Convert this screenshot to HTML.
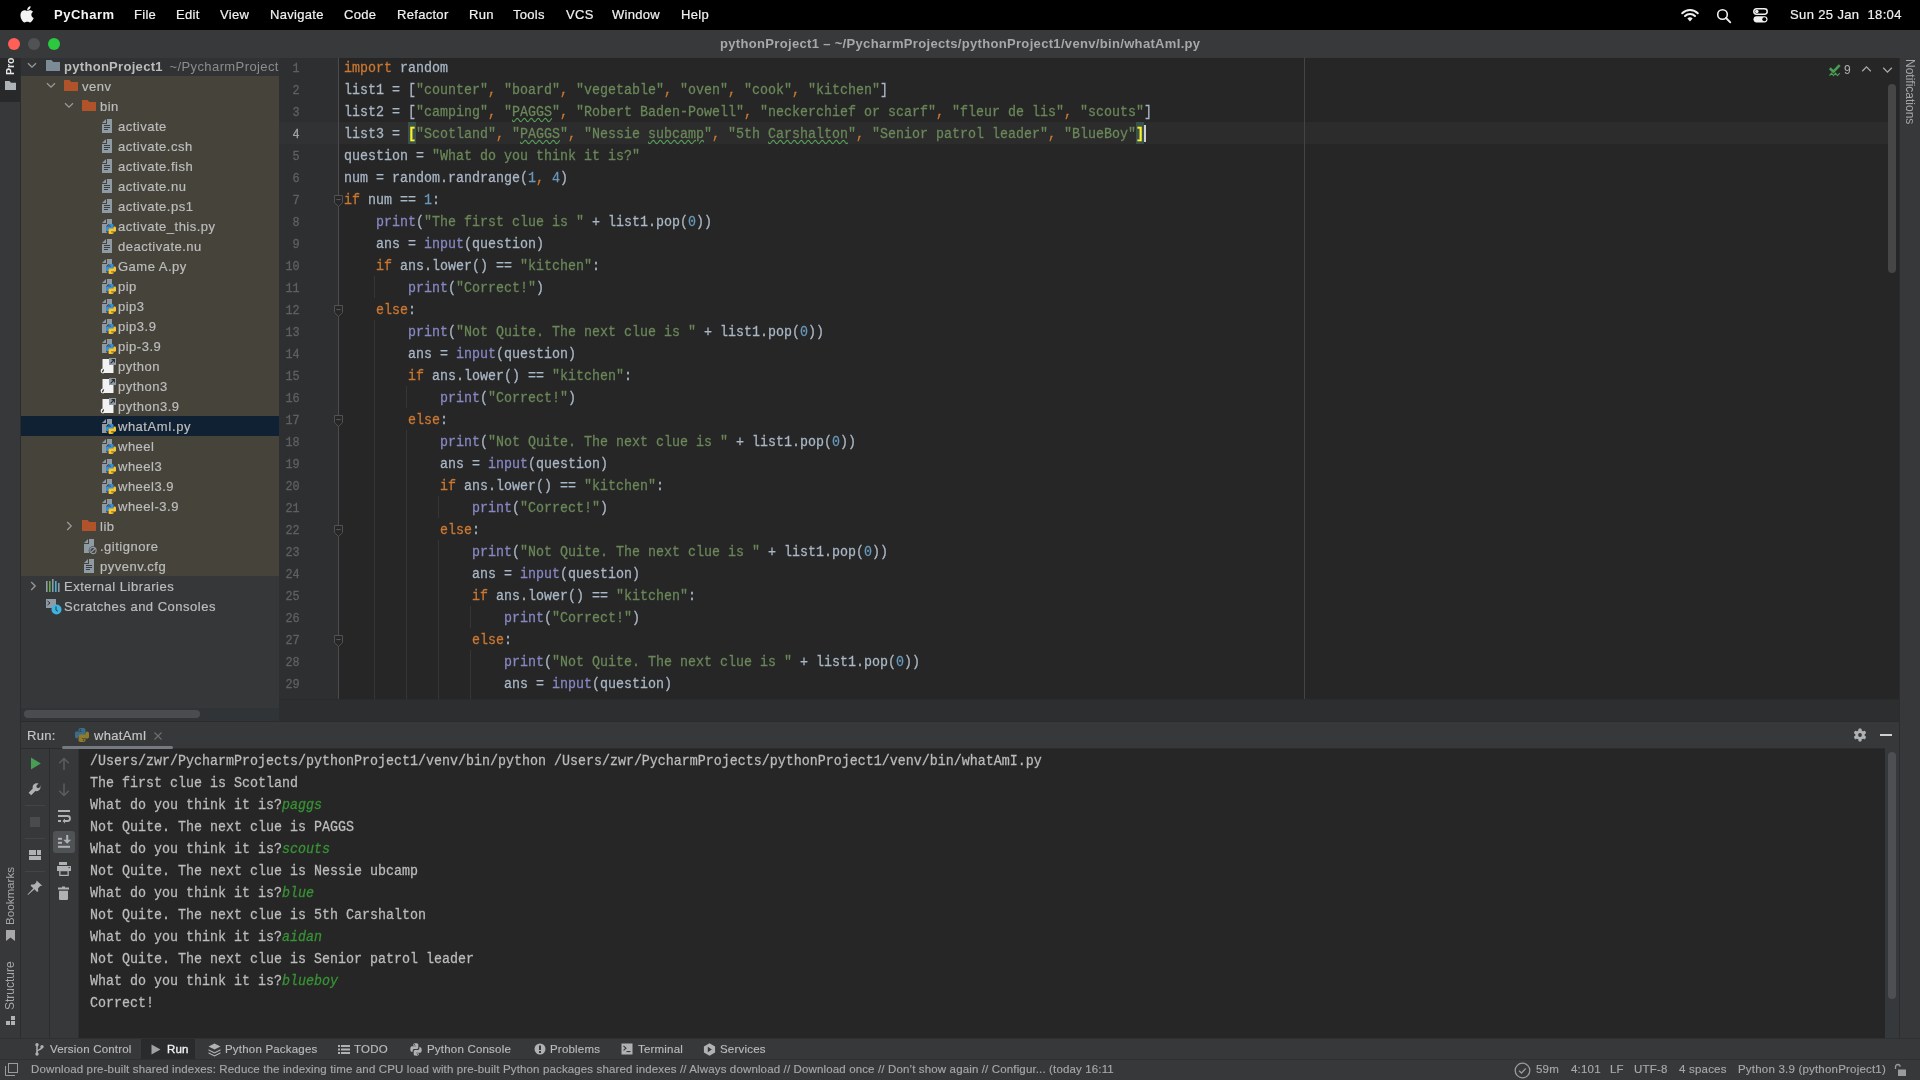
<!DOCTYPE html><html><head><meta charset="utf-8"><title>PyCharm</title><style>html,body{margin:0;padding:0}body{width:1920px;height:1080px;overflow:hidden;position:relative;background:#37383a}</style></head><body><div style="position:absolute;left:0;top:0;width:1920px;height:1080px;overflow:hidden;will-change:transform">
<div style="position:absolute;left:0px;top:0px;width:1920px;height:30px;background:#000;"></div>
<svg style="position:absolute;left:20px;top:5.6px;" width="16" height="18" viewBox="0 0 16 18"><g transform="translate(0.3 0) scale(0.92 0.96)"><path fill="#f2f2f2" d="M11.2 0.3c0.1 1.1-0.3 2.1-1 2.9-0.7 0.8-1.7 1.3-2.7 1.2-0.1-1 0.4-2.1 1-2.8 0.7-0.8 1.8-1.3 2.7-1.3zM14.6 12.6c-0.4 0.9-0.6 1.3-1.1 2.1-0.7 1.1-1.7 2.5-3 2.5-1.1 0-1.4-0.7-2.9-0.7-1.5 0-1.8 0.7-2.9 0.7-1.3 0-2.2-1.3-2.9-2.4C-0.1 11.9-0.3 8.3 0.9 6.4 1.8 5.1 3.1 4.3 4.400 4.300c1.3 0 2.1 0.7 3.2 0.7 1 0 1.700-0.7 3.200-0.7 1.100 0 2.300 0.600 3.100 1.700-2.800 1.500-2.300 5.500 0.700 6.600z"/></g></svg>
<div style="position:absolute;left:54px;top:6.82px;font-family:'Liberation Sans', sans-serif;font-size:13px;color:#f5f5f5;font-weight:bold;white-space:pre;line-height:normal;letter-spacing:0.5px;">PyCharm</div>
<div style="position:absolute;left:134px;top:6.82px;font-family:'Liberation Sans', sans-serif;font-size:13px;color:#f0f0f0;font-weight:normal;white-space:pre;line-height:normal;letter-spacing:0.3px;-webkit-text-stroke:0.2px #f0f0f0">File</div>
<div style="position:absolute;left:176px;top:6.82px;font-family:'Liberation Sans', sans-serif;font-size:13px;color:#f0f0f0;font-weight:normal;white-space:pre;line-height:normal;letter-spacing:0.3px;-webkit-text-stroke:0.2px #f0f0f0">Edit</div>
<div style="position:absolute;left:220px;top:6.82px;font-family:'Liberation Sans', sans-serif;font-size:13px;color:#f0f0f0;font-weight:normal;white-space:pre;line-height:normal;letter-spacing:0.3px;-webkit-text-stroke:0.2px #f0f0f0">View</div>
<div style="position:absolute;left:270px;top:6.82px;font-family:'Liberation Sans', sans-serif;font-size:13px;color:#f0f0f0;font-weight:normal;white-space:pre;line-height:normal;letter-spacing:0.3px;-webkit-text-stroke:0.2px #f0f0f0">Navigate</div>
<div style="position:absolute;left:344px;top:6.82px;font-family:'Liberation Sans', sans-serif;font-size:13px;color:#f0f0f0;font-weight:normal;white-space:pre;line-height:normal;letter-spacing:0.3px;-webkit-text-stroke:0.2px #f0f0f0">Code</div>
<div style="position:absolute;left:397px;top:6.82px;font-family:'Liberation Sans', sans-serif;font-size:13px;color:#f0f0f0;font-weight:normal;white-space:pre;line-height:normal;letter-spacing:0.3px;-webkit-text-stroke:0.2px #f0f0f0">Refactor</div>
<div style="position:absolute;left:469px;top:6.82px;font-family:'Liberation Sans', sans-serif;font-size:13px;color:#f0f0f0;font-weight:normal;white-space:pre;line-height:normal;letter-spacing:0.3px;-webkit-text-stroke:0.2px #f0f0f0">Run</div>
<div style="position:absolute;left:513px;top:6.82px;font-family:'Liberation Sans', sans-serif;font-size:13px;color:#f0f0f0;font-weight:normal;white-space:pre;line-height:normal;letter-spacing:0.3px;-webkit-text-stroke:0.2px #f0f0f0">Tools</div>
<div style="position:absolute;left:566px;top:6.82px;font-family:'Liberation Sans', sans-serif;font-size:13px;color:#f0f0f0;font-weight:normal;white-space:pre;line-height:normal;letter-spacing:0.3px;-webkit-text-stroke:0.2px #f0f0f0">VCS</div>
<div style="position:absolute;left:612px;top:6.82px;font-family:'Liberation Sans', sans-serif;font-size:13px;color:#f0f0f0;font-weight:normal;white-space:pre;line-height:normal;letter-spacing:0.3px;-webkit-text-stroke:0.2px #f0f0f0">Window</div>
<div style="position:absolute;left:681px;top:6.82px;font-family:'Liberation Sans', sans-serif;font-size:13px;color:#f0f0f0;font-weight:normal;white-space:pre;line-height:normal;letter-spacing:0.3px;-webkit-text-stroke:0.2px #f0f0f0">Help</div>
<svg style="position:absolute;left:1680px;top:7px;" width="20" height="16" viewBox="0 0 20 16"><g fill="none" stroke="#f0f0f0" stroke-width="2" stroke-linecap="round"><path d="M2.2 6.2a11 11 0 0 1 15.6 0"/><path d="M5 9a7 7 0 0 1 10 0"/></g><path fill="#f0f0f0" d="M7.4 11.6a3.6 3.6 0 0 1 5.2 0L10 14.6z"/></svg>
<svg style="position:absolute;left:1716px;top:8px;" width="16" height="16" viewBox="0 0 16 16"><circle cx="6.5" cy="6.5" r="4.8" fill="none" stroke="#f0f0f0" stroke-width="1.6"/><path d="M10 10l4.3 4.3" stroke="#f0f0f0" stroke-width="1.8" stroke-linecap="round"/></svg>
<svg style="position:absolute;left:1753px;top:8px;" width="16" height="15" viewBox="0 0 16 15"><rect x="0.8" y="0.8" width="13.4" height="5.4" rx="2.7" fill="none" stroke="#f0f0f0" stroke-width="1.5"/><circle cx="3.8" cy="3.5" r="1.8" fill="#f0f0f0"/><rect x="0.5" y="8.2" width="14" height="6.2" rx="3.1" fill="#f0f0f0"/><circle cx="11.3" cy="11.3" r="2" fill="#000"/></svg>
<div style="position:absolute;left:1790px;top:6.82px;font-family:'Liberation Sans', sans-serif;font-size:13px;color:#f0f0f0;font-weight:normal;white-space:pre;line-height:normal;letter-spacing:0.37px;-webkit-text-stroke:0.2px #f0f0f0">Sun 25 Jan  18:04</div>
<div style="position:absolute;left:0px;top:30px;width:1920px;height:28px;background:#37393b;"></div>
<div style="position:absolute;left:8px;top:38px;width:12px;height:12px;border-radius:50%;background:#fe5f57"></div>
<div style="position:absolute;left:28px;top:38px;width:12px;height:12px;border-radius:50%;background:#505254"></div>
<div style="position:absolute;left:48px;top:38px;width:12px;height:12px;border-radius:50%;background:#2bc840"></div>
<div style="position:absolute;left:720px;top:36.02px;font-family:'Liberation Sans', sans-serif;font-size:13px;color:#a8a8a8;font-weight:bold;white-space:pre;line-height:normal;letter-spacing:0.33px;">pythonProject1 – ~/PycharmProjects/pythonProject1/venv/bin/whatAmI.py</div>
<div style="position:absolute;left:0px;top:58px;width:20px;height:980px;background:#37383a;"></div>
<div style="position:absolute;left:20px;top:58px;width:1px;height:980px;background:#2b2c2e;"></div>
<div style="position:absolute;left:0px;top:58px;width:20px;height:44px;background:#27292a;"></div>
<div style="position:absolute;left:3.9px;top:75px;transform-origin:0 0;transform:rotate(-90deg);font-family:'Liberation Sans', sans-serif;font-size:10.5px;color:#e6e6e6;font-weight:bold;white-space:pre;line-height:12px">Pro</div>
<svg style="position:absolute;left:5px;top:81px;" width="11" height="9" viewBox="0 0 11 9"><path fill="#aeb3b8" d="M0 0h4.5l1.5 1.8H11V9H0z"/></svg>
<div style="position:absolute;left:4.3px;top:925px;transform-origin:0 0;transform:rotate(-90deg);font-family:'Liberation Sans', sans-serif;font-size:11.6px;color:#a8a8a8;white-space:pre;line-height:12px">Bookmarks</div>
<svg style="position:absolute;left:6px;top:930px;" width="10" height="11" viewBox="0 0 10 11"><path fill="#a8a8a8" d="M0 0h9v11L4.5 7.5 0 11z"/></svg>
<div style="position:absolute;left:4px;top:1010px;transform-origin:0 0;transform:rotate(-90deg);font-family:'Liberation Sans', sans-serif;font-size:12px;color:#a8a8a8;white-space:pre;line-height:12px">Structure</div>
<svg style="position:absolute;left:6px;top:1016px;" width="10" height="10" viewBox="0 0 10 10"><g fill="#b0b2b4"><rect x="5" y="0" width="4" height="4"/><rect x="0" y="5" width="4" height="4"/><rect x="5" y="5" width="4" height="4"/></g></svg>
<div style="position:absolute;left:1899px;top:58px;width:1px;height:980px;background:#2b2c2e;"></div>
<div style="position:absolute;left:1900px;top:58px;width:20px;height:980px;background:#37383a;"></div>
<div style="position:absolute;left:1916px;top:59px;transform-origin:0 0;transform:rotate(90deg);font-family:'Liberation Sans', sans-serif;font-size:12px;color:#a8a8a8;white-space:pre;line-height:12px">Notifications</div>
<div style="position:absolute;left:21px;top:58px;width:258px;height:650px;background:#363739;"></div>
<div style="position:absolute;left:21px;top:58px;width:258px;height:18px;background:#313234;"></div>
<div style="position:absolute;left:21px;top:76px;width:258px;height:500px;background:#45433a;"></div>
<div style="position:absolute;left:21px;top:416px;width:258px;height:20px;background:#0f2133;"></div>
<div style="position:absolute;left:21px;top:708px;width:258px;height:13px;background:#303437;"></div>
<div style="position:absolute;left:24px;top:710px;width:176px;height:8px;border-radius:4px;background:#4b4c4e"></div>
<svg style="position:absolute;left:27px;top:62px;" width="10" height="7" viewBox="0 0 10 7"><path d="M1 1.2l4 4 4-4" fill="none" stroke="#9a9a9a" stroke-width="1.3"/></svg>
<svg style="position:absolute;left:46px;top:60px;" width="14" height="11" viewBox="0 0 14 11"><path fill="#7c8b96" d="M0 0h5.5l1.8 2H14V11H0z"/></svg>
<div style="position:absolute;left:64px;top:59.02px;font-family:'Liberation Sans', sans-serif;font-size:13px;color:#bcbcbc;font-weight:bold;white-space:pre;line-height:normal;letter-spacing:0.3px;">pythonProject1</div>
<div style="position:absolute;left:169.5px;top:59.02px;font-family:'Liberation Sans', sans-serif;font-size:13px;color:#8c8c8c;font-weight:normal;white-space:pre;line-height:normal;letter-spacing:0.4px;">~/PycharmProjects</div>
<svg style="position:absolute;left:46px;top:82px;" width="10" height="7" viewBox="0 0 10 7"><path d="M1 1.2l4 4 4-4" fill="none" stroke="#9a9a9a" stroke-width="1.3"/></svg>
<svg style="position:absolute;left:64px;top:80px;" width="14" height="11" viewBox="0 0 14 11"><path fill="#b0532a" d="M0 0h5.5l1.8 2H14V11H0z"/></svg>
<div style="position:absolute;left:82px;top:79.02px;font-family:'Liberation Sans', sans-serif;font-size:13px;color:#bcbcbc;font-weight:normal;white-space:pre;line-height:normal;letter-spacing:0.5px;-webkit-text-stroke:0.2px currentColor">venv</div>
<svg style="position:absolute;left:64px;top:102px;" width="10" height="7" viewBox="0 0 10 7"><path d="M1 1.2l4 4 4-4" fill="none" stroke="#9a9a9a" stroke-width="1.3"/></svg>
<svg style="position:absolute;left:82px;top:100px;" width="14" height="11" viewBox="0 0 14 11"><path fill="#b0532a" d="M0 0h5.5l1.8 2H14V11H0z"/></svg>
<div style="position:absolute;left:100px;top:99.02px;font-family:'Liberation Sans', sans-serif;font-size:13px;color:#bcbcbc;font-weight:normal;white-space:pre;line-height:normal;letter-spacing:0.5px;-webkit-text-stroke:0.2px currentColor">bin</div>
<svg style="position:absolute;left:102px;top:119px;" width="10" height="14" viewBox="0 0 10 14"><path fill="#8e9ba5" d="M5 0H10V14H0V5H5z"/><path fill="#8e9ba5" d="M0 4L4 0V4z"/><g fill="#3b3d3e"><rect x="2" y="6" width="6" height="1"/><rect x="2" y="8" width="6" height="1"/><rect x="2" y="10" width="4" height="1"/></g></svg>
<div style="position:absolute;left:118px;top:119.02px;font-family:'Liberation Sans', sans-serif;font-size:13px;color:#bcbcbc;font-weight:normal;white-space:pre;line-height:normal;letter-spacing:0.5px;-webkit-text-stroke:0.2px currentColor">activate</div>
<svg style="position:absolute;left:102px;top:139px;" width="10" height="14" viewBox="0 0 10 14"><path fill="#8e9ba5" d="M5 0H10V14H0V5H5z"/><path fill="#8e9ba5" d="M0 4L4 0V4z"/><g fill="#3b3d3e"><rect x="2" y="6" width="6" height="1"/><rect x="2" y="8" width="6" height="1"/><rect x="2" y="10" width="4" height="1"/></g></svg>
<div style="position:absolute;left:118px;top:139.02px;font-family:'Liberation Sans', sans-serif;font-size:13px;color:#bcbcbc;font-weight:normal;white-space:pre;line-height:normal;letter-spacing:0.5px;-webkit-text-stroke:0.2px currentColor">activate.csh</div>
<svg style="position:absolute;left:102px;top:159px;" width="10" height="14" viewBox="0 0 10 14"><path fill="#8e9ba5" d="M5 0H10V14H0V5H5z"/><path fill="#8e9ba5" d="M0 4L4 0V4z"/><g fill="#3b3d3e"><rect x="2" y="6" width="6" height="1"/><rect x="2" y="8" width="6" height="1"/><rect x="2" y="10" width="4" height="1"/></g></svg>
<div style="position:absolute;left:118px;top:159.02px;font-family:'Liberation Sans', sans-serif;font-size:13px;color:#bcbcbc;font-weight:normal;white-space:pre;line-height:normal;letter-spacing:0.5px;-webkit-text-stroke:0.2px currentColor">activate.fish</div>
<svg style="position:absolute;left:102px;top:179px;" width="10" height="14" viewBox="0 0 10 14"><path fill="#8e9ba5" d="M5 0H10V14H0V5H5z"/><path fill="#8e9ba5" d="M0 4L4 0V4z"/><g fill="#3b3d3e"><rect x="2" y="6" width="6" height="1"/><rect x="2" y="8" width="6" height="1"/><rect x="2" y="10" width="4" height="1"/></g></svg>
<div style="position:absolute;left:118px;top:179.02px;font-family:'Liberation Sans', sans-serif;font-size:13px;color:#bcbcbc;font-weight:normal;white-space:pre;line-height:normal;letter-spacing:0.5px;-webkit-text-stroke:0.2px currentColor">activate.nu</div>
<svg style="position:absolute;left:102px;top:199px;" width="10" height="14" viewBox="0 0 10 14"><path fill="#8e9ba5" d="M5 0H10V14H0V5H5z"/><path fill="#8e9ba5" d="M0 4L4 0V4z"/><g fill="#3b3d3e"><rect x="2" y="6" width="6" height="1"/><rect x="2" y="8" width="6" height="1"/><rect x="2" y="10" width="4" height="1"/></g></svg>
<div style="position:absolute;left:118px;top:199.02px;font-family:'Liberation Sans', sans-serif;font-size:13px;color:#bcbcbc;font-weight:normal;white-space:pre;line-height:normal;letter-spacing:0.5px;-webkit-text-stroke:0.2px currentColor">activate.ps1</div>
<svg style="position:absolute;left:102px;top:219px;" width="10" height="14" viewBox="0 0 10 14"><path fill="#8e9ba5" d="M5 0H10V14H0V5H5z"/><path fill="#8e9ba5" d="M0 4L4 0V4z"/></svg>
<svg style="position:absolute;left:106px;top:224px" width="10" height="10" viewBox="0 0 14 14"><circle cx="7" cy="7" r="7.6" fill="#45433a"/><g fill="#3b8fd0"><rect x="3.5" y="0" width="7" height="5" rx="1.8"/><rect x="0" y="3.6" width="10.5" height="4" rx="1.8"/><rect x="0" y="3.6" width="3.6" height="6.9" rx="1.8"/></g><rect x="3.4" y="3.1" width="3.6" height="0.6" fill="#45433a"/><circle cx="5.4" cy="1.7" r="0.7" fill="#45433a"/><g fill="#f7c631"><rect x="3.5" y="9" width="7" height="5" rx="1.8"/><rect x="3.5" y="6.4" width="10.5" height="4" rx="1.8"/><rect x="10.4" y="3.5" width="3.6" height="6.9" rx="1.8"/></g><rect x="7" y="10.3" width="3.6" height="0.6" fill="#45433a"/><circle cx="8.6" cy="12.3" r="0.7" fill="#45433a"/></svg>
<div style="position:absolute;left:118px;top:219.02px;font-family:'Liberation Sans', sans-serif;font-size:13px;color:#bcbcbc;font-weight:normal;white-space:pre;line-height:normal;letter-spacing:0.5px;-webkit-text-stroke:0.2px currentColor">activate_this.py</div>
<svg style="position:absolute;left:102px;top:239px;" width="10" height="14" viewBox="0 0 10 14"><path fill="#8e9ba5" d="M5 0H10V14H0V5H5z"/><path fill="#8e9ba5" d="M0 4L4 0V4z"/><g fill="#3b3d3e"><rect x="2" y="6" width="6" height="1"/><rect x="2" y="8" width="6" height="1"/><rect x="2" y="10" width="4" height="1"/></g></svg>
<div style="position:absolute;left:118px;top:239.02px;font-family:'Liberation Sans', sans-serif;font-size:13px;color:#bcbcbc;font-weight:normal;white-space:pre;line-height:normal;letter-spacing:0.5px;-webkit-text-stroke:0.2px currentColor">deactivate.nu</div>
<svg style="position:absolute;left:102px;top:259px;" width="10" height="14" viewBox="0 0 10 14"><path fill="#8e9ba5" d="M5 0H10V14H0V5H5z"/><path fill="#8e9ba5" d="M0 4L4 0V4z"/></svg>
<svg style="position:absolute;left:106px;top:264px" width="10" height="10" viewBox="0 0 14 14"><circle cx="7" cy="7" r="7.6" fill="#45433a"/><g fill="#3b8fd0"><rect x="3.5" y="0" width="7" height="5" rx="1.8"/><rect x="0" y="3.6" width="10.5" height="4" rx="1.8"/><rect x="0" y="3.6" width="3.6" height="6.9" rx="1.8"/></g><rect x="3.4" y="3.1" width="3.6" height="0.6" fill="#45433a"/><circle cx="5.4" cy="1.7" r="0.7" fill="#45433a"/><g fill="#f7c631"><rect x="3.5" y="9" width="7" height="5" rx="1.8"/><rect x="3.5" y="6.4" width="10.5" height="4" rx="1.8"/><rect x="10.4" y="3.5" width="3.6" height="6.9" rx="1.8"/></g><rect x="7" y="10.3" width="3.6" height="0.6" fill="#45433a"/><circle cx="8.6" cy="12.3" r="0.7" fill="#45433a"/></svg>
<div style="position:absolute;left:118px;top:259.02px;font-family:'Liberation Sans', sans-serif;font-size:13px;color:#bcbcbc;font-weight:normal;white-space:pre;line-height:normal;letter-spacing:0.5px;-webkit-text-stroke:0.2px currentColor">Game A.py</div>
<svg style="position:absolute;left:102px;top:279px;" width="10" height="14" viewBox="0 0 10 14"><path fill="#8e9ba5" d="M5 0H10V14H0V5H5z"/><path fill="#8e9ba5" d="M0 4L4 0V4z"/></svg>
<svg style="position:absolute;left:106px;top:284px" width="10" height="10" viewBox="0 0 14 14"><circle cx="7" cy="7" r="7.6" fill="#45433a"/><g fill="#3b8fd0"><rect x="3.5" y="0" width="7" height="5" rx="1.8"/><rect x="0" y="3.6" width="10.5" height="4" rx="1.8"/><rect x="0" y="3.6" width="3.6" height="6.9" rx="1.8"/></g><rect x="3.4" y="3.1" width="3.6" height="0.6" fill="#45433a"/><circle cx="5.4" cy="1.7" r="0.7" fill="#45433a"/><g fill="#f7c631"><rect x="3.5" y="9" width="7" height="5" rx="1.8"/><rect x="3.5" y="6.4" width="10.5" height="4" rx="1.8"/><rect x="10.4" y="3.5" width="3.6" height="6.9" rx="1.8"/></g><rect x="7" y="10.3" width="3.6" height="0.6" fill="#45433a"/><circle cx="8.6" cy="12.3" r="0.7" fill="#45433a"/></svg>
<div style="position:absolute;left:118px;top:279.02px;font-family:'Liberation Sans', sans-serif;font-size:13px;color:#bcbcbc;font-weight:normal;white-space:pre;line-height:normal;letter-spacing:0.5px;-webkit-text-stroke:0.2px currentColor">pip</div>
<svg style="position:absolute;left:102px;top:299px;" width="10" height="14" viewBox="0 0 10 14"><path fill="#8e9ba5" d="M5 0H10V14H0V5H5z"/><path fill="#8e9ba5" d="M0 4L4 0V4z"/></svg>
<svg style="position:absolute;left:106px;top:304px" width="10" height="10" viewBox="0 0 14 14"><circle cx="7" cy="7" r="7.6" fill="#45433a"/><g fill="#3b8fd0"><rect x="3.5" y="0" width="7" height="5" rx="1.8"/><rect x="0" y="3.6" width="10.5" height="4" rx="1.8"/><rect x="0" y="3.6" width="3.6" height="6.9" rx="1.8"/></g><rect x="3.4" y="3.1" width="3.6" height="0.6" fill="#45433a"/><circle cx="5.4" cy="1.7" r="0.7" fill="#45433a"/><g fill="#f7c631"><rect x="3.5" y="9" width="7" height="5" rx="1.8"/><rect x="3.5" y="6.4" width="10.5" height="4" rx="1.8"/><rect x="10.4" y="3.5" width="3.6" height="6.9" rx="1.8"/></g><rect x="7" y="10.3" width="3.6" height="0.6" fill="#45433a"/><circle cx="8.6" cy="12.3" r="0.7" fill="#45433a"/></svg>
<div style="position:absolute;left:118px;top:299.02px;font-family:'Liberation Sans', sans-serif;font-size:13px;color:#bcbcbc;font-weight:normal;white-space:pre;line-height:normal;letter-spacing:0.5px;-webkit-text-stroke:0.2px currentColor">pip3</div>
<svg style="position:absolute;left:102px;top:319px;" width="10" height="14" viewBox="0 0 10 14"><path fill="#8e9ba5" d="M5 0H10V14H0V5H5z"/><path fill="#8e9ba5" d="M0 4L4 0V4z"/></svg>
<svg style="position:absolute;left:106px;top:324px" width="10" height="10" viewBox="0 0 14 14"><circle cx="7" cy="7" r="7.6" fill="#45433a"/><g fill="#3b8fd0"><rect x="3.5" y="0" width="7" height="5" rx="1.8"/><rect x="0" y="3.6" width="10.5" height="4" rx="1.8"/><rect x="0" y="3.6" width="3.6" height="6.9" rx="1.8"/></g><rect x="3.4" y="3.1" width="3.6" height="0.6" fill="#45433a"/><circle cx="5.4" cy="1.7" r="0.7" fill="#45433a"/><g fill="#f7c631"><rect x="3.5" y="9" width="7" height="5" rx="1.8"/><rect x="3.5" y="6.4" width="10.5" height="4" rx="1.8"/><rect x="10.4" y="3.5" width="3.6" height="6.9" rx="1.8"/></g><rect x="7" y="10.3" width="3.6" height="0.6" fill="#45433a"/><circle cx="8.6" cy="12.3" r="0.7" fill="#45433a"/></svg>
<div style="position:absolute;left:118px;top:319.02px;font-family:'Liberation Sans', sans-serif;font-size:13px;color:#bcbcbc;font-weight:normal;white-space:pre;line-height:normal;letter-spacing:0.5px;-webkit-text-stroke:0.2px currentColor">pip3.9</div>
<svg style="position:absolute;left:102px;top:339px;" width="10" height="14" viewBox="0 0 10 14"><path fill="#8e9ba5" d="M5 0H10V14H0V5H5z"/><path fill="#8e9ba5" d="M0 4L4 0V4z"/></svg>
<svg style="position:absolute;left:106px;top:344px" width="10" height="10" viewBox="0 0 14 14"><circle cx="7" cy="7" r="7.6" fill="#45433a"/><g fill="#3b8fd0"><rect x="3.5" y="0" width="7" height="5" rx="1.8"/><rect x="0" y="3.6" width="10.5" height="4" rx="1.8"/><rect x="0" y="3.6" width="3.6" height="6.9" rx="1.8"/></g><rect x="3.4" y="3.1" width="3.6" height="0.6" fill="#45433a"/><circle cx="5.4" cy="1.7" r="0.7" fill="#45433a"/><g fill="#f7c631"><rect x="3.5" y="9" width="7" height="5" rx="1.8"/><rect x="3.5" y="6.4" width="10.5" height="4" rx="1.8"/><rect x="10.4" y="3.5" width="3.6" height="6.9" rx="1.8"/></g><rect x="7" y="10.3" width="3.6" height="0.6" fill="#45433a"/><circle cx="8.6" cy="12.3" r="0.7" fill="#45433a"/></svg>
<div style="position:absolute;left:118px;top:339.02px;font-family:'Liberation Sans', sans-serif;font-size:13px;color:#bcbcbc;font-weight:normal;white-space:pre;line-height:normal;letter-spacing:0.5px;-webkit-text-stroke:0.2px currentColor">pip-3.9</div>
<svg style="position:absolute;left:99px;top:358px;" width="17" height="17" viewBox="0 0 17 17"><rect x="3.5" y="1" width="11" height="14" fill="#f2f2f2"/><rect x="10" y="0" width="7" height="7" fill="#8e9ba5"/><path d="M11.6 5.4L15.2 1.8M12.6 1.6h2.8v2.8" fill="none" stroke="#2b2b2b" stroke-width="1.1"/><circle cx="4" cy="13" r="2.4" fill="#f2f2f2"/><path d="M4.6 11.6L3.4 14.2" stroke="#222" stroke-width="1.1"/></svg>
<div style="position:absolute;left:118px;top:359.02px;font-family:'Liberation Sans', sans-serif;font-size:13px;color:#bcbcbc;font-weight:normal;white-space:pre;line-height:normal;letter-spacing:0.5px;-webkit-text-stroke:0.2px currentColor">python</div>
<svg style="position:absolute;left:99px;top:378px;" width="17" height="17" viewBox="0 0 17 17"><rect x="3.5" y="1" width="11" height="14" fill="#f2f2f2"/><rect x="10" y="0" width="7" height="7" fill="#8e9ba5"/><path d="M11.6 5.4L15.2 1.8M12.6 1.6h2.8v2.8" fill="none" stroke="#2b2b2b" stroke-width="1.1"/><circle cx="4" cy="13" r="2.4" fill="#f2f2f2"/><path d="M4.6 11.6L3.4 14.2" stroke="#222" stroke-width="1.1"/></svg>
<div style="position:absolute;left:118px;top:379.02px;font-family:'Liberation Sans', sans-serif;font-size:13px;color:#bcbcbc;font-weight:normal;white-space:pre;line-height:normal;letter-spacing:0.5px;-webkit-text-stroke:0.2px currentColor">python3</div>
<svg style="position:absolute;left:99px;top:398px;" width="17" height="17" viewBox="0 0 17 17"><rect x="3.5" y="1" width="11" height="14" fill="#f2f2f2"/><rect x="10" y="0" width="7" height="7" fill="#8e9ba5"/><path d="M11.6 5.4L15.2 1.8M12.6 1.6h2.8v2.8" fill="none" stroke="#2b2b2b" stroke-width="1.1"/><circle cx="4" cy="13" r="2.4" fill="#f2f2f2"/><path d="M4.6 11.6L3.4 14.2" stroke="#222" stroke-width="1.1"/></svg>
<div style="position:absolute;left:118px;top:399.02px;font-family:'Liberation Sans', sans-serif;font-size:13px;color:#bcbcbc;font-weight:normal;white-space:pre;line-height:normal;letter-spacing:0.5px;-webkit-text-stroke:0.2px currentColor">python3.9</div>
<svg style="position:absolute;left:102px;top:419px;" width="10" height="14" viewBox="0 0 10 14"><path fill="#8e9ba5" d="M5 0H10V14H0V5H5z"/><path fill="#8e9ba5" d="M0 4L4 0V4z"/></svg>
<svg style="position:absolute;left:106px;top:424px" width="10" height="10" viewBox="0 0 14 14"><circle cx="7" cy="7" r="7.6" fill="#0f2133"/><g fill="#3b8fd0"><rect x="3.5" y="0" width="7" height="5" rx="1.8"/><rect x="0" y="3.6" width="10.5" height="4" rx="1.8"/><rect x="0" y="3.6" width="3.6" height="6.9" rx="1.8"/></g><rect x="3.4" y="3.1" width="3.6" height="0.6" fill="#0f2133"/><circle cx="5.4" cy="1.7" r="0.7" fill="#0f2133"/><g fill="#f7c631"><rect x="3.5" y="9" width="7" height="5" rx="1.8"/><rect x="3.5" y="6.4" width="10.5" height="4" rx="1.8"/><rect x="10.4" y="3.5" width="3.6" height="6.9" rx="1.8"/></g><rect x="7" y="10.3" width="3.6" height="0.6" fill="#0f2133"/><circle cx="8.6" cy="12.3" r="0.7" fill="#0f2133"/></svg>
<div style="position:absolute;left:118px;top:419.02px;font-family:'Liberation Sans', sans-serif;font-size:13px;color:#bcbcbc;font-weight:normal;white-space:pre;line-height:normal;letter-spacing:0.5px;-webkit-text-stroke:0.2px currentColor">whatAmI.py</div>
<svg style="position:absolute;left:102px;top:439px;" width="10" height="14" viewBox="0 0 10 14"><path fill="#8e9ba5" d="M5 0H10V14H0V5H5z"/><path fill="#8e9ba5" d="M0 4L4 0V4z"/></svg>
<svg style="position:absolute;left:106px;top:444px" width="10" height="10" viewBox="0 0 14 14"><circle cx="7" cy="7" r="7.6" fill="#45433a"/><g fill="#3b8fd0"><rect x="3.5" y="0" width="7" height="5" rx="1.8"/><rect x="0" y="3.6" width="10.5" height="4" rx="1.8"/><rect x="0" y="3.6" width="3.6" height="6.9" rx="1.8"/></g><rect x="3.4" y="3.1" width="3.6" height="0.6" fill="#45433a"/><circle cx="5.4" cy="1.7" r="0.7" fill="#45433a"/><g fill="#f7c631"><rect x="3.5" y="9" width="7" height="5" rx="1.8"/><rect x="3.5" y="6.4" width="10.5" height="4" rx="1.8"/><rect x="10.4" y="3.5" width="3.6" height="6.9" rx="1.8"/></g><rect x="7" y="10.3" width="3.6" height="0.6" fill="#45433a"/><circle cx="8.6" cy="12.3" r="0.7" fill="#45433a"/></svg>
<div style="position:absolute;left:118px;top:439.02px;font-family:'Liberation Sans', sans-serif;font-size:13px;color:#bcbcbc;font-weight:normal;white-space:pre;line-height:normal;letter-spacing:0.5px;-webkit-text-stroke:0.2px currentColor">wheel</div>
<svg style="position:absolute;left:102px;top:459px;" width="10" height="14" viewBox="0 0 10 14"><path fill="#8e9ba5" d="M5 0H10V14H0V5H5z"/><path fill="#8e9ba5" d="M0 4L4 0V4z"/></svg>
<svg style="position:absolute;left:106px;top:464px" width="10" height="10" viewBox="0 0 14 14"><circle cx="7" cy="7" r="7.6" fill="#45433a"/><g fill="#3b8fd0"><rect x="3.5" y="0" width="7" height="5" rx="1.8"/><rect x="0" y="3.6" width="10.5" height="4" rx="1.8"/><rect x="0" y="3.6" width="3.6" height="6.9" rx="1.8"/></g><rect x="3.4" y="3.1" width="3.6" height="0.6" fill="#45433a"/><circle cx="5.4" cy="1.7" r="0.7" fill="#45433a"/><g fill="#f7c631"><rect x="3.5" y="9" width="7" height="5" rx="1.8"/><rect x="3.5" y="6.4" width="10.5" height="4" rx="1.8"/><rect x="10.4" y="3.5" width="3.6" height="6.9" rx="1.8"/></g><rect x="7" y="10.3" width="3.6" height="0.6" fill="#45433a"/><circle cx="8.6" cy="12.3" r="0.7" fill="#45433a"/></svg>
<div style="position:absolute;left:118px;top:459.02px;font-family:'Liberation Sans', sans-serif;font-size:13px;color:#bcbcbc;font-weight:normal;white-space:pre;line-height:normal;letter-spacing:0.5px;-webkit-text-stroke:0.2px currentColor">wheel3</div>
<svg style="position:absolute;left:102px;top:479px;" width="10" height="14" viewBox="0 0 10 14"><path fill="#8e9ba5" d="M5 0H10V14H0V5H5z"/><path fill="#8e9ba5" d="M0 4L4 0V4z"/></svg>
<svg style="position:absolute;left:106px;top:484px" width="10" height="10" viewBox="0 0 14 14"><circle cx="7" cy="7" r="7.6" fill="#45433a"/><g fill="#3b8fd0"><rect x="3.5" y="0" width="7" height="5" rx="1.8"/><rect x="0" y="3.6" width="10.5" height="4" rx="1.8"/><rect x="0" y="3.6" width="3.6" height="6.9" rx="1.8"/></g><rect x="3.4" y="3.1" width="3.6" height="0.6" fill="#45433a"/><circle cx="5.4" cy="1.7" r="0.7" fill="#45433a"/><g fill="#f7c631"><rect x="3.5" y="9" width="7" height="5" rx="1.8"/><rect x="3.5" y="6.4" width="10.5" height="4" rx="1.8"/><rect x="10.4" y="3.5" width="3.6" height="6.9" rx="1.8"/></g><rect x="7" y="10.3" width="3.6" height="0.6" fill="#45433a"/><circle cx="8.6" cy="12.3" r="0.7" fill="#45433a"/></svg>
<div style="position:absolute;left:118px;top:479.02px;font-family:'Liberation Sans', sans-serif;font-size:13px;color:#bcbcbc;font-weight:normal;white-space:pre;line-height:normal;letter-spacing:0.5px;-webkit-text-stroke:0.2px currentColor">wheel3.9</div>
<svg style="position:absolute;left:102px;top:499px;" width="10" height="14" viewBox="0 0 10 14"><path fill="#8e9ba5" d="M5 0H10V14H0V5H5z"/><path fill="#8e9ba5" d="M0 4L4 0V4z"/></svg>
<svg style="position:absolute;left:106px;top:504px" width="10" height="10" viewBox="0 0 14 14"><circle cx="7" cy="7" r="7.6" fill="#45433a"/><g fill="#3b8fd0"><rect x="3.5" y="0" width="7" height="5" rx="1.8"/><rect x="0" y="3.6" width="10.5" height="4" rx="1.8"/><rect x="0" y="3.6" width="3.6" height="6.9" rx="1.8"/></g><rect x="3.4" y="3.1" width="3.6" height="0.6" fill="#45433a"/><circle cx="5.4" cy="1.7" r="0.7" fill="#45433a"/><g fill="#f7c631"><rect x="3.5" y="9" width="7" height="5" rx="1.8"/><rect x="3.5" y="6.4" width="10.5" height="4" rx="1.8"/><rect x="10.4" y="3.5" width="3.6" height="6.9" rx="1.8"/></g><rect x="7" y="10.3" width="3.6" height="0.6" fill="#45433a"/><circle cx="8.6" cy="12.3" r="0.7" fill="#45433a"/></svg>
<div style="position:absolute;left:118px;top:499.02px;font-family:'Liberation Sans', sans-serif;font-size:13px;color:#bcbcbc;font-weight:normal;white-space:pre;line-height:normal;letter-spacing:0.5px;-webkit-text-stroke:0.2px currentColor">wheel-3.9</div>
<svg style="position:absolute;left:66px;top:521px;" width="7" height="10" viewBox="0 0 7 10"><path d="M1.2 1l4 4-4 4" fill="none" stroke="#9a9a9a" stroke-width="1.3"/></svg>
<svg style="position:absolute;left:82px;top:520px;" width="14" height="11" viewBox="0 0 14 11"><path fill="#b0532a" d="M0 0h5.5l1.8 2H14V11H0z"/></svg>
<div style="position:absolute;left:100px;top:519.02px;font-family:'Liberation Sans', sans-serif;font-size:13px;color:#bcbcbc;font-weight:normal;white-space:pre;line-height:normal;letter-spacing:0.5px;-webkit-text-stroke:0.2px currentColor">lib</div>
<svg style="position:absolute;left:84px;top:539px;" width="14" height="16" viewBox="0 0 14 16"><path fill="#8e9ba5" d="M5 0H10V14H0V5H5z"/><path fill="#8e9ba5" d="M0 4L4 0V4z"/><circle cx="9" cy="11.500" r="4.300" fill="#45433a"/><circle cx="9" cy="11.500" r="3.100" fill="none" stroke="#8e9ba5" stroke-width="1.100"/><path d="M7 13.500L11 9.500" stroke="#8e9ba5" stroke-width="1.100"/></svg>
<div style="position:absolute;left:100px;top:539.02px;font-family:'Liberation Sans', sans-serif;font-size:13px;color:#bcbcbc;font-weight:normal;white-space:pre;line-height:normal;letter-spacing:0.5px;-webkit-text-stroke:0.2px currentColor">.gitignore</div>
<svg style="position:absolute;left:84px;top:559px;" width="10" height="14" viewBox="0 0 10 14"><path fill="#8e9ba5" d="M5 0H10V14H0V5H5z"/><path fill="#8e9ba5" d="M0 4L4 0V4z"/><g fill="#3b3d3e"><rect x="2" y="6" width="6" height="1"/><rect x="2" y="8" width="6" height="1"/><rect x="2" y="10" width="4" height="1"/></g></svg>
<div style="position:absolute;left:100px;top:559.02px;font-family:'Liberation Sans', sans-serif;font-size:13px;color:#bcbcbc;font-weight:normal;white-space:pre;line-height:normal;letter-spacing:0.5px;-webkit-text-stroke:0.2px currentColor">pyvenv.cfg</div>
<svg style="position:absolute;left:30px;top:581px;" width="7" height="10" viewBox="0 0 7 10"><path d="M1.2 1l4 4-4 4" fill="none" stroke="#9a9a9a" stroke-width="1.3"/></svg>
<svg style="position:absolute;left:46px;top:579px;" width="15" height="13" viewBox="0 0 15 13"><rect x="0" y="2" width="1.6" height="11" fill="#8e9ba5"/><rect x="3" y="2" width="1.6" height="11" fill="#5fb04a"/><rect x="6" y="0" width="1.6" height="13" fill="#8e9ba5"/><rect x="9" y="2" width="1.6" height="11" fill="#3fb2e0"/><rect x="12" y="4" width="1.6" height="9" fill="#8e9ba5"/></svg>
<div style="position:absolute;left:64px;top:579.02px;font-family:'Liberation Sans', sans-serif;font-size:13px;color:#bcbcbc;font-weight:normal;white-space:pre;line-height:normal;letter-spacing:0.5px;-webkit-text-stroke:0.2px currentColor">External Libraries</div>
<svg style="position:absolute;left:45px;top:598px;" width="17" height="17" viewBox="0 0 17 17"><rect x="1" y="1" width="10" height="9" fill="#8e9ba5"/><path d="M2.5 3l2.5 2-2.5 2" fill="none" stroke="#323335" stroke-width="1"/><circle cx="11.5" cy="11.5" r="5" fill="#3fb2e0"/><path d="M11 8.5v3.3l1.8 1.6" fill="none" stroke="#1d4a5a" stroke-width="1.1"/></svg>
<div style="position:absolute;left:64px;top:599.02px;font-family:'Liberation Sans', sans-serif;font-size:13px;color:#bcbcbc;font-weight:normal;white-space:pre;line-height:normal;letter-spacing:0.5px;-webkit-text-stroke:0.2px currentColor">Scratches and Consoles</div>
<div style="position:absolute;left:279px;top:58px;width:1620px;height:641px;background:#262626;"></div>
<div style="position:absolute;left:279px;top:58px;width:59px;height:641px;background:#2e2f30;"></div>
<div style="position:absolute;left:339px;top:122px;width:1550px;height:22px;background:#2c2c2c;"></div>
<div style="position:absolute;left:279px;top:122px;width:59px;height:22px;background:#313234;"></div>
<div style="position:absolute;left:338px;top:58px;width:1px;height:641px;background:#4a4b4c;"></div>
<div style="position:absolute;left:1304px;top:58px;width:1px;height:641px;background:#444444;"></div>
<div style="position:absolute;left:279px;top:699px;width:1620px;height:22px;background:#2d2e30;"></div>
<div style="position:absolute;left:279px;top:699px;width:1620px;height:1px;background:#2a2b2c;"></div>
<div style="position:absolute;left:21px;top:721px;width:1878px;height:1px;background:#2b2c2e;"></div>
<div style="position:absolute;left:240px;top:62.17px;font-family:'Liberation Mono', monospace;font-size:11.8px;color:#5f6163;font-weight:normal;white-space:pre;line-height:normal;letter-spacing:0px;width:59.6px;text-align:right;transform:scaleY(1.1);transform-origin:0 9.83px;-webkit-text-stroke:0.25px currentColor;">1</div>
<div style="position:absolute;left:344px;top:60.89px;font-family:'Liberation Mono', monospace;font-size:13.333px;color:#a9b7c6;font-weight:normal;white-space:pre;line-height:normal;letter-spacing:0px;transform:scaleY(1.1);transform-origin:0 11.11px;-webkit-text-stroke:0.25px currentColor;"><span style="color:#cc7832;">import</span><span style="color:#a9b7c6;"> </span><span style="color:#a9b7c6;">random</span></div>
<div style="position:absolute;left:240px;top:84.17px;font-family:'Liberation Mono', monospace;font-size:11.8px;color:#5f6163;font-weight:normal;white-space:pre;line-height:normal;letter-spacing:0px;width:59.6px;text-align:right;transform:scaleY(1.1);transform-origin:0 9.83px;-webkit-text-stroke:0.25px currentColor;">2</div>
<div style="position:absolute;left:344px;top:82.89px;font-family:'Liberation Mono', monospace;font-size:13.333px;color:#a9b7c6;font-weight:normal;white-space:pre;line-height:normal;letter-spacing:0px;transform:scaleY(1.1);transform-origin:0 11.11px;-webkit-text-stroke:0.25px currentColor;"><span style="color:#a9b7c6;">list1</span><span style="color:#a9b7c6;"> = [</span><span style="color:#6a8759;">&quot;counter&quot;</span><span style="color:#cc7832;">,</span><span style="color:#a9b7c6;"> </span><span style="color:#6a8759;">&quot;board&quot;</span><span style="color:#cc7832;">,</span><span style="color:#a9b7c6;"> </span><span style="color:#6a8759;">&quot;vegetable&quot;</span><span style="color:#cc7832;">,</span><span style="color:#a9b7c6;"> </span><span style="color:#6a8759;">&quot;oven&quot;</span><span style="color:#cc7832;">,</span><span style="color:#a9b7c6;"> </span><span style="color:#6a8759;">&quot;cook&quot;</span><span style="color:#cc7832;">,</span><span style="color:#a9b7c6;"> </span><span style="color:#6a8759;">&quot;kitchen&quot;</span><span style="color:#a9b7c6;">]</span></div>
<div style="position:absolute;left:240px;top:106.17px;font-family:'Liberation Mono', monospace;font-size:11.8px;color:#5f6163;font-weight:normal;white-space:pre;line-height:normal;letter-spacing:0px;width:59.6px;text-align:right;transform:scaleY(1.1);transform-origin:0 9.83px;-webkit-text-stroke:0.25px currentColor;">3</div>
<div style="position:absolute;left:344px;top:104.89px;font-family:'Liberation Mono', monospace;font-size:13.333px;color:#a9b7c6;font-weight:normal;white-space:pre;line-height:normal;letter-spacing:0px;transform:scaleY(1.1);transform-origin:0 11.11px;-webkit-text-stroke:0.25px currentColor;"><span style="color:#a9b7c6;">list2</span><span style="color:#a9b7c6;"> = [</span><span style="color:#6a8759;">&quot;camping&quot;</span><span style="color:#cc7832;">,</span><span style="color:#a9b7c6;"> </span><span style="color:#6a8759;">&quot;</span><span style="color:#6a8759;text-decoration:underline wavy #58a35c;text-decoration-thickness:1px;text-underline-offset:1px">PAGGS</span><span style="color:#6a8759;">&quot;</span><span style="color:#cc7832;">,</span><span style="color:#a9b7c6;"> </span><span style="color:#6a8759;">&quot;Robert Baden-Powell&quot;</span><span style="color:#cc7832;">,</span><span style="color:#a9b7c6;"> </span><span style="color:#6a8759;">&quot;neckerchief or scarf&quot;</span><span style="color:#cc7832;">,</span><span style="color:#a9b7c6;"> </span><span style="color:#6a8759;">&quot;fleur de lis&quot;</span><span style="color:#cc7832;">,</span><span style="color:#a9b7c6;"> </span><span style="color:#6a8759;">&quot;scouts&quot;</span><span style="color:#a9b7c6;">]</span></div>
<div style="position:absolute;left:240px;top:128.17px;font-family:'Liberation Mono', monospace;font-size:11.8px;color:#a4a3a3;font-weight:normal;white-space:pre;line-height:normal;letter-spacing:0px;width:59.6px;text-align:right;transform:scaleY(1.1);transform-origin:0 9.83px;-webkit-text-stroke:0.25px currentColor;">4</div>
<div style="position:absolute;left:408px;top:122px;width:8px;height:22px;background:#3a514b;"></div>
<div style="position:absolute;left:1136px;top:122px;width:8px;height:22px;background:#3a514b;"></div>
<div style="position:absolute;left:344px;top:126.89px;font-family:'Liberation Mono', monospace;font-size:13.333px;color:#a9b7c6;font-weight:normal;white-space:pre;line-height:normal;letter-spacing:0px;transform:scaleY(1.1);transform-origin:0 11.11px;-webkit-text-stroke:0.25px currentColor;"><span style="color:#a9b7c6;">list3</span><span style="color:#a9b7c6;"> = </span><span style="color:#ffef28;font-weight:bold">[</span><span style="color:#6a8759;">&quot;Scotland&quot;</span><span style="color:#cc7832;">,</span><span style="color:#a9b7c6;"> </span><span style="color:#6a8759;">&quot;</span><span style="color:#6a8759;text-decoration:underline wavy #58a35c;text-decoration-thickness:1px;text-underline-offset:1px">PAGGS</span><span style="color:#6a8759;">&quot;</span><span style="color:#cc7832;">,</span><span style="color:#a9b7c6;"> </span><span style="color:#6a8759;">&quot;Nessie </span><span style="color:#6a8759;text-decoration:underline wavy #58a35c;text-decoration-thickness:1px;text-underline-offset:1px">subcamp</span><span style="color:#6a8759;">&quot;</span><span style="color:#cc7832;">,</span><span style="color:#a9b7c6;"> </span><span style="color:#6a8759;">&quot;5th </span><span style="color:#6a8759;text-decoration:underline wavy #58a35c;text-decoration-thickness:1px;text-underline-offset:1px">Carshalton</span><span style="color:#6a8759;">&quot;</span><span style="color:#cc7832;">,</span><span style="color:#a9b7c6;"> </span><span style="color:#6a8759;">&quot;Senior patrol leader&quot;</span><span style="color:#cc7832;">,</span><span style="color:#a9b7c6;"> </span><span style="color:#6a8759;">&quot;BlueBoy&quot;</span><span style="color:#ffef28;font-weight:bold">]</span></div>
<div style="position:absolute;left:240px;top:150.17px;font-family:'Liberation Mono', monospace;font-size:11.8px;color:#5f6163;font-weight:normal;white-space:pre;line-height:normal;letter-spacing:0px;width:59.6px;text-align:right;transform:scaleY(1.1);transform-origin:0 9.83px;-webkit-text-stroke:0.25px currentColor;">5</div>
<div style="position:absolute;left:344px;top:148.89px;font-family:'Liberation Mono', monospace;font-size:13.333px;color:#a9b7c6;font-weight:normal;white-space:pre;line-height:normal;letter-spacing:0px;transform:scaleY(1.1);transform-origin:0 11.11px;-webkit-text-stroke:0.25px currentColor;"><span style="color:#a9b7c6;">question</span><span style="color:#a9b7c6;"> = </span><span style="color:#6a8759;">&quot;What do you think it is?&quot;</span></div>
<div style="position:absolute;left:240px;top:172.17px;font-family:'Liberation Mono', monospace;font-size:11.8px;color:#5f6163;font-weight:normal;white-space:pre;line-height:normal;letter-spacing:0px;width:59.6px;text-align:right;transform:scaleY(1.1);transform-origin:0 9.83px;-webkit-text-stroke:0.25px currentColor;">6</div>
<div style="position:absolute;left:344px;top:170.89px;font-family:'Liberation Mono', monospace;font-size:13.333px;color:#a9b7c6;font-weight:normal;white-space:pre;line-height:normal;letter-spacing:0px;transform:scaleY(1.1);transform-origin:0 11.11px;-webkit-text-stroke:0.25px currentColor;"><span style="color:#a9b7c6;">num</span><span style="color:#a9b7c6;"> = </span><span style="color:#a9b7c6;">random</span><span style="color:#a9b7c6;">.</span><span style="color:#a9b7c6;">randrange</span><span style="color:#a9b7c6;">(</span><span style="color:#6897bb;">1</span><span style="color:#cc7832;">,</span><span style="color:#a9b7c6;"> </span><span style="color:#6897bb;">4</span><span style="color:#a9b7c6;">)</span></div>
<div style="position:absolute;left:240px;top:194.17px;font-family:'Liberation Mono', monospace;font-size:11.8px;color:#5f6163;font-weight:normal;white-space:pre;line-height:normal;letter-spacing:0px;width:59.6px;text-align:right;transform:scaleY(1.1);transform-origin:0 9.83px;-webkit-text-stroke:0.25px currentColor;">7</div>
<div style="position:absolute;left:344px;top:192.89px;font-family:'Liberation Mono', monospace;font-size:13.333px;color:#a9b7c6;font-weight:normal;white-space:pre;line-height:normal;letter-spacing:0px;transform:scaleY(1.1);transform-origin:0 11.11px;-webkit-text-stroke:0.25px currentColor;"><span style="color:#cc7832;">if</span><span style="color:#a9b7c6;"> </span><span style="color:#a9b7c6;">num</span><span style="color:#a9b7c6;"> == </span><span style="color:#6897bb;">1</span><span style="color:#a9b7c6;">:</span></div>
<div style="position:absolute;left:240px;top:216.17px;font-family:'Liberation Mono', monospace;font-size:11.8px;color:#5f6163;font-weight:normal;white-space:pre;line-height:normal;letter-spacing:0px;width:59.6px;text-align:right;transform:scaleY(1.1);transform-origin:0 9.83px;-webkit-text-stroke:0.25px currentColor;">8</div>
<div style="position:absolute;left:344px;top:214.89px;font-family:'Liberation Mono', monospace;font-size:13.333px;color:#a9b7c6;font-weight:normal;white-space:pre;line-height:normal;letter-spacing:0px;transform:scaleY(1.1);transform-origin:0 11.11px;-webkit-text-stroke:0.25px currentColor;"><span style="color:#a9b7c6;">    </span><span style="color:#8888c6;">print</span><span style="color:#a9b7c6;">(</span><span style="color:#6a8759;">&quot;The first clue is &quot;</span><span style="color:#a9b7c6;"> + </span><span style="color:#a9b7c6;">list1</span><span style="color:#a9b7c6;">.</span><span style="color:#a9b7c6;">pop</span><span style="color:#a9b7c6;">(</span><span style="color:#6897bb;">0</span><span style="color:#a9b7c6;">))</span></div>
<div style="position:absolute;left:240px;top:238.17px;font-family:'Liberation Mono', monospace;font-size:11.8px;color:#5f6163;font-weight:normal;white-space:pre;line-height:normal;letter-spacing:0px;width:59.6px;text-align:right;transform:scaleY(1.1);transform-origin:0 9.83px;-webkit-text-stroke:0.25px currentColor;">9</div>
<div style="position:absolute;left:344px;top:236.89px;font-family:'Liberation Mono', monospace;font-size:13.333px;color:#a9b7c6;font-weight:normal;white-space:pre;line-height:normal;letter-spacing:0px;transform:scaleY(1.1);transform-origin:0 11.11px;-webkit-text-stroke:0.25px currentColor;"><span style="color:#a9b7c6;">    </span><span style="color:#a9b7c6;">ans</span><span style="color:#a9b7c6;"> = </span><span style="color:#8888c6;">input</span><span style="color:#a9b7c6;">(</span><span style="color:#a9b7c6;">question</span><span style="color:#a9b7c6;">)</span></div>
<div style="position:absolute;left:240px;top:260.17px;font-family:'Liberation Mono', monospace;font-size:11.8px;color:#5f6163;font-weight:normal;white-space:pre;line-height:normal;letter-spacing:0px;width:59.6px;text-align:right;transform:scaleY(1.1);transform-origin:0 9.83px;-webkit-text-stroke:0.25px currentColor;">10</div>
<div style="position:absolute;left:344px;top:258.89px;font-family:'Liberation Mono', monospace;font-size:13.333px;color:#a9b7c6;font-weight:normal;white-space:pre;line-height:normal;letter-spacing:0px;transform:scaleY(1.1);transform-origin:0 11.11px;-webkit-text-stroke:0.25px currentColor;"><span style="color:#a9b7c6;">    </span><span style="color:#cc7832;">if</span><span style="color:#a9b7c6;"> </span><span style="color:#a9b7c6;">ans</span><span style="color:#a9b7c6;">.</span><span style="color:#a9b7c6;">lower</span><span style="color:#a9b7c6;">() == </span><span style="color:#6a8759;">&quot;kitchen&quot;</span><span style="color:#a9b7c6;">:</span></div>
<div style="position:absolute;left:240px;top:282.17px;font-family:'Liberation Mono', monospace;font-size:11.8px;color:#5f6163;font-weight:normal;white-space:pre;line-height:normal;letter-spacing:0px;width:59.6px;text-align:right;transform:scaleY(1.1);transform-origin:0 9.83px;-webkit-text-stroke:0.25px currentColor;">11</div>
<div style="position:absolute;left:344px;top:280.89px;font-family:'Liberation Mono', monospace;font-size:13.333px;color:#a9b7c6;font-weight:normal;white-space:pre;line-height:normal;letter-spacing:0px;transform:scaleY(1.1);transform-origin:0 11.11px;-webkit-text-stroke:0.25px currentColor;"><span style="color:#a9b7c6;">        </span><span style="color:#8888c6;">print</span><span style="color:#a9b7c6;">(</span><span style="color:#6a8759;">&quot;Correct!&quot;</span><span style="color:#a9b7c6;">)</span></div>
<div style="position:absolute;left:240px;top:304.17px;font-family:'Liberation Mono', monospace;font-size:11.8px;color:#5f6163;font-weight:normal;white-space:pre;line-height:normal;letter-spacing:0px;width:59.6px;text-align:right;transform:scaleY(1.1);transform-origin:0 9.83px;-webkit-text-stroke:0.25px currentColor;">12</div>
<div style="position:absolute;left:344px;top:302.89px;font-family:'Liberation Mono', monospace;font-size:13.333px;color:#a9b7c6;font-weight:normal;white-space:pre;line-height:normal;letter-spacing:0px;transform:scaleY(1.1);transform-origin:0 11.11px;-webkit-text-stroke:0.25px currentColor;"><span style="color:#a9b7c6;">    </span><span style="color:#cc7832;">else</span><span style="color:#a9b7c6;">:</span></div>
<div style="position:absolute;left:240px;top:326.17px;font-family:'Liberation Mono', monospace;font-size:11.8px;color:#5f6163;font-weight:normal;white-space:pre;line-height:normal;letter-spacing:0px;width:59.6px;text-align:right;transform:scaleY(1.1);transform-origin:0 9.83px;-webkit-text-stroke:0.25px currentColor;">13</div>
<div style="position:absolute;left:344px;top:324.89px;font-family:'Liberation Mono', monospace;font-size:13.333px;color:#a9b7c6;font-weight:normal;white-space:pre;line-height:normal;letter-spacing:0px;transform:scaleY(1.1);transform-origin:0 11.11px;-webkit-text-stroke:0.25px currentColor;"><span style="color:#a9b7c6;">        </span><span style="color:#8888c6;">print</span><span style="color:#a9b7c6;">(</span><span style="color:#6a8759;">&quot;Not Quite. The next clue is &quot;</span><span style="color:#a9b7c6;"> + </span><span style="color:#a9b7c6;">list1</span><span style="color:#a9b7c6;">.</span><span style="color:#a9b7c6;">pop</span><span style="color:#a9b7c6;">(</span><span style="color:#6897bb;">0</span><span style="color:#a9b7c6;">))</span></div>
<div style="position:absolute;left:240px;top:348.17px;font-family:'Liberation Mono', monospace;font-size:11.8px;color:#5f6163;font-weight:normal;white-space:pre;line-height:normal;letter-spacing:0px;width:59.6px;text-align:right;transform:scaleY(1.1);transform-origin:0 9.83px;-webkit-text-stroke:0.25px currentColor;">14</div>
<div style="position:absolute;left:344px;top:346.89px;font-family:'Liberation Mono', monospace;font-size:13.333px;color:#a9b7c6;font-weight:normal;white-space:pre;line-height:normal;letter-spacing:0px;transform:scaleY(1.1);transform-origin:0 11.11px;-webkit-text-stroke:0.25px currentColor;"><span style="color:#a9b7c6;">        </span><span style="color:#a9b7c6;">ans</span><span style="color:#a9b7c6;"> = </span><span style="color:#8888c6;">input</span><span style="color:#a9b7c6;">(</span><span style="color:#a9b7c6;">question</span><span style="color:#a9b7c6;">)</span></div>
<div style="position:absolute;left:240px;top:370.17px;font-family:'Liberation Mono', monospace;font-size:11.8px;color:#5f6163;font-weight:normal;white-space:pre;line-height:normal;letter-spacing:0px;width:59.6px;text-align:right;transform:scaleY(1.1);transform-origin:0 9.83px;-webkit-text-stroke:0.25px currentColor;">15</div>
<div style="position:absolute;left:344px;top:368.89px;font-family:'Liberation Mono', monospace;font-size:13.333px;color:#a9b7c6;font-weight:normal;white-space:pre;line-height:normal;letter-spacing:0px;transform:scaleY(1.1);transform-origin:0 11.11px;-webkit-text-stroke:0.25px currentColor;"><span style="color:#a9b7c6;">        </span><span style="color:#cc7832;">if</span><span style="color:#a9b7c6;"> </span><span style="color:#a9b7c6;">ans</span><span style="color:#a9b7c6;">.</span><span style="color:#a9b7c6;">lower</span><span style="color:#a9b7c6;">() == </span><span style="color:#6a8759;">&quot;kitchen&quot;</span><span style="color:#a9b7c6;">:</span></div>
<div style="position:absolute;left:240px;top:392.17px;font-family:'Liberation Mono', monospace;font-size:11.8px;color:#5f6163;font-weight:normal;white-space:pre;line-height:normal;letter-spacing:0px;width:59.6px;text-align:right;transform:scaleY(1.1);transform-origin:0 9.83px;-webkit-text-stroke:0.25px currentColor;">16</div>
<div style="position:absolute;left:344px;top:390.89px;font-family:'Liberation Mono', monospace;font-size:13.333px;color:#a9b7c6;font-weight:normal;white-space:pre;line-height:normal;letter-spacing:0px;transform:scaleY(1.1);transform-origin:0 11.11px;-webkit-text-stroke:0.25px currentColor;"><span style="color:#a9b7c6;">            </span><span style="color:#8888c6;">print</span><span style="color:#a9b7c6;">(</span><span style="color:#6a8759;">&quot;Correct!&quot;</span><span style="color:#a9b7c6;">)</span></div>
<div style="position:absolute;left:240px;top:414.17px;font-family:'Liberation Mono', monospace;font-size:11.8px;color:#5f6163;font-weight:normal;white-space:pre;line-height:normal;letter-spacing:0px;width:59.6px;text-align:right;transform:scaleY(1.1);transform-origin:0 9.83px;-webkit-text-stroke:0.25px currentColor;">17</div>
<div style="position:absolute;left:344px;top:412.89px;font-family:'Liberation Mono', monospace;font-size:13.333px;color:#a9b7c6;font-weight:normal;white-space:pre;line-height:normal;letter-spacing:0px;transform:scaleY(1.1);transform-origin:0 11.11px;-webkit-text-stroke:0.25px currentColor;"><span style="color:#a9b7c6;">        </span><span style="color:#cc7832;">else</span><span style="color:#a9b7c6;">:</span></div>
<div style="position:absolute;left:240px;top:436.17px;font-family:'Liberation Mono', monospace;font-size:11.8px;color:#5f6163;font-weight:normal;white-space:pre;line-height:normal;letter-spacing:0px;width:59.6px;text-align:right;transform:scaleY(1.1);transform-origin:0 9.83px;-webkit-text-stroke:0.25px currentColor;">18</div>
<div style="position:absolute;left:344px;top:434.89px;font-family:'Liberation Mono', monospace;font-size:13.333px;color:#a9b7c6;font-weight:normal;white-space:pre;line-height:normal;letter-spacing:0px;transform:scaleY(1.1);transform-origin:0 11.11px;-webkit-text-stroke:0.25px currentColor;"><span style="color:#a9b7c6;">            </span><span style="color:#8888c6;">print</span><span style="color:#a9b7c6;">(</span><span style="color:#6a8759;">&quot;Not Quite. The next clue is &quot;</span><span style="color:#a9b7c6;"> + </span><span style="color:#a9b7c6;">list1</span><span style="color:#a9b7c6;">.</span><span style="color:#a9b7c6;">pop</span><span style="color:#a9b7c6;">(</span><span style="color:#6897bb;">0</span><span style="color:#a9b7c6;">))</span></div>
<div style="position:absolute;left:240px;top:458.17px;font-family:'Liberation Mono', monospace;font-size:11.8px;color:#5f6163;font-weight:normal;white-space:pre;line-height:normal;letter-spacing:0px;width:59.6px;text-align:right;transform:scaleY(1.1);transform-origin:0 9.83px;-webkit-text-stroke:0.25px currentColor;">19</div>
<div style="position:absolute;left:344px;top:456.89px;font-family:'Liberation Mono', monospace;font-size:13.333px;color:#a9b7c6;font-weight:normal;white-space:pre;line-height:normal;letter-spacing:0px;transform:scaleY(1.1);transform-origin:0 11.11px;-webkit-text-stroke:0.25px currentColor;"><span style="color:#a9b7c6;">            </span><span style="color:#a9b7c6;">ans</span><span style="color:#a9b7c6;"> = </span><span style="color:#8888c6;">input</span><span style="color:#a9b7c6;">(</span><span style="color:#a9b7c6;">question</span><span style="color:#a9b7c6;">)</span></div>
<div style="position:absolute;left:240px;top:480.17px;font-family:'Liberation Mono', monospace;font-size:11.8px;color:#5f6163;font-weight:normal;white-space:pre;line-height:normal;letter-spacing:0px;width:59.6px;text-align:right;transform:scaleY(1.1);transform-origin:0 9.83px;-webkit-text-stroke:0.25px currentColor;">20</div>
<div style="position:absolute;left:344px;top:478.89px;font-family:'Liberation Mono', monospace;font-size:13.333px;color:#a9b7c6;font-weight:normal;white-space:pre;line-height:normal;letter-spacing:0px;transform:scaleY(1.1);transform-origin:0 11.11px;-webkit-text-stroke:0.25px currentColor;"><span style="color:#a9b7c6;">            </span><span style="color:#cc7832;">if</span><span style="color:#a9b7c6;"> </span><span style="color:#a9b7c6;">ans</span><span style="color:#a9b7c6;">.</span><span style="color:#a9b7c6;">lower</span><span style="color:#a9b7c6;">() == </span><span style="color:#6a8759;">&quot;kitchen&quot;</span><span style="color:#a9b7c6;">:</span></div>
<div style="position:absolute;left:240px;top:502.17px;font-family:'Liberation Mono', monospace;font-size:11.8px;color:#5f6163;font-weight:normal;white-space:pre;line-height:normal;letter-spacing:0px;width:59.6px;text-align:right;transform:scaleY(1.1);transform-origin:0 9.83px;-webkit-text-stroke:0.25px currentColor;">21</div>
<div style="position:absolute;left:344px;top:500.89px;font-family:'Liberation Mono', monospace;font-size:13.333px;color:#a9b7c6;font-weight:normal;white-space:pre;line-height:normal;letter-spacing:0px;transform:scaleY(1.1);transform-origin:0 11.11px;-webkit-text-stroke:0.25px currentColor;"><span style="color:#a9b7c6;">                </span><span style="color:#8888c6;">print</span><span style="color:#a9b7c6;">(</span><span style="color:#6a8759;">&quot;Correct!&quot;</span><span style="color:#a9b7c6;">)</span></div>
<div style="position:absolute;left:240px;top:524.17px;font-family:'Liberation Mono', monospace;font-size:11.8px;color:#5f6163;font-weight:normal;white-space:pre;line-height:normal;letter-spacing:0px;width:59.6px;text-align:right;transform:scaleY(1.1);transform-origin:0 9.83px;-webkit-text-stroke:0.25px currentColor;">22</div>
<div style="position:absolute;left:344px;top:522.89px;font-family:'Liberation Mono', monospace;font-size:13.333px;color:#a9b7c6;font-weight:normal;white-space:pre;line-height:normal;letter-spacing:0px;transform:scaleY(1.1);transform-origin:0 11.11px;-webkit-text-stroke:0.25px currentColor;"><span style="color:#a9b7c6;">            </span><span style="color:#cc7832;">else</span><span style="color:#a9b7c6;">:</span></div>
<div style="position:absolute;left:240px;top:546.17px;font-family:'Liberation Mono', monospace;font-size:11.8px;color:#5f6163;font-weight:normal;white-space:pre;line-height:normal;letter-spacing:0px;width:59.6px;text-align:right;transform:scaleY(1.1);transform-origin:0 9.83px;-webkit-text-stroke:0.25px currentColor;">23</div>
<div style="position:absolute;left:344px;top:544.89px;font-family:'Liberation Mono', monospace;font-size:13.333px;color:#a9b7c6;font-weight:normal;white-space:pre;line-height:normal;letter-spacing:0px;transform:scaleY(1.1);transform-origin:0 11.11px;-webkit-text-stroke:0.25px currentColor;"><span style="color:#a9b7c6;">                </span><span style="color:#8888c6;">print</span><span style="color:#a9b7c6;">(</span><span style="color:#6a8759;">&quot;Not Quite. The next clue is &quot;</span><span style="color:#a9b7c6;"> + </span><span style="color:#a9b7c6;">list1</span><span style="color:#a9b7c6;">.</span><span style="color:#a9b7c6;">pop</span><span style="color:#a9b7c6;">(</span><span style="color:#6897bb;">0</span><span style="color:#a9b7c6;">))</span></div>
<div style="position:absolute;left:240px;top:568.17px;font-family:'Liberation Mono', monospace;font-size:11.8px;color:#5f6163;font-weight:normal;white-space:pre;line-height:normal;letter-spacing:0px;width:59.6px;text-align:right;transform:scaleY(1.1);transform-origin:0 9.83px;-webkit-text-stroke:0.25px currentColor;">24</div>
<div style="position:absolute;left:344px;top:566.89px;font-family:'Liberation Mono', monospace;font-size:13.333px;color:#a9b7c6;font-weight:normal;white-space:pre;line-height:normal;letter-spacing:0px;transform:scaleY(1.1);transform-origin:0 11.11px;-webkit-text-stroke:0.25px currentColor;"><span style="color:#a9b7c6;">                </span><span style="color:#a9b7c6;">ans</span><span style="color:#a9b7c6;"> = </span><span style="color:#8888c6;">input</span><span style="color:#a9b7c6;">(</span><span style="color:#a9b7c6;">question</span><span style="color:#a9b7c6;">)</span></div>
<div style="position:absolute;left:240px;top:590.17px;font-family:'Liberation Mono', monospace;font-size:11.8px;color:#5f6163;font-weight:normal;white-space:pre;line-height:normal;letter-spacing:0px;width:59.6px;text-align:right;transform:scaleY(1.1);transform-origin:0 9.83px;-webkit-text-stroke:0.25px currentColor;">25</div>
<div style="position:absolute;left:344px;top:588.89px;font-family:'Liberation Mono', monospace;font-size:13.333px;color:#a9b7c6;font-weight:normal;white-space:pre;line-height:normal;letter-spacing:0px;transform:scaleY(1.1);transform-origin:0 11.11px;-webkit-text-stroke:0.25px currentColor;"><span style="color:#a9b7c6;">                </span><span style="color:#cc7832;">if</span><span style="color:#a9b7c6;"> </span><span style="color:#a9b7c6;">ans</span><span style="color:#a9b7c6;">.</span><span style="color:#a9b7c6;">lower</span><span style="color:#a9b7c6;">() == </span><span style="color:#6a8759;">&quot;kitchen&quot;</span><span style="color:#a9b7c6;">:</span></div>
<div style="position:absolute;left:240px;top:612.17px;font-family:'Liberation Mono', monospace;font-size:11.8px;color:#5f6163;font-weight:normal;white-space:pre;line-height:normal;letter-spacing:0px;width:59.6px;text-align:right;transform:scaleY(1.1);transform-origin:0 9.83px;-webkit-text-stroke:0.25px currentColor;">26</div>
<div style="position:absolute;left:344px;top:610.89px;font-family:'Liberation Mono', monospace;font-size:13.333px;color:#a9b7c6;font-weight:normal;white-space:pre;line-height:normal;letter-spacing:0px;transform:scaleY(1.1);transform-origin:0 11.11px;-webkit-text-stroke:0.25px currentColor;"><span style="color:#a9b7c6;">                    </span><span style="color:#8888c6;">print</span><span style="color:#a9b7c6;">(</span><span style="color:#6a8759;">&quot;Correct!&quot;</span><span style="color:#a9b7c6;">)</span></div>
<div style="position:absolute;left:240px;top:634.17px;font-family:'Liberation Mono', monospace;font-size:11.8px;color:#5f6163;font-weight:normal;white-space:pre;line-height:normal;letter-spacing:0px;width:59.6px;text-align:right;transform:scaleY(1.1);transform-origin:0 9.83px;-webkit-text-stroke:0.25px currentColor;">27</div>
<div style="position:absolute;left:344px;top:632.89px;font-family:'Liberation Mono', monospace;font-size:13.333px;color:#a9b7c6;font-weight:normal;white-space:pre;line-height:normal;letter-spacing:0px;transform:scaleY(1.1);transform-origin:0 11.11px;-webkit-text-stroke:0.25px currentColor;"><span style="color:#a9b7c6;">                </span><span style="color:#cc7832;">else</span><span style="color:#a9b7c6;">:</span></div>
<div style="position:absolute;left:240px;top:656.17px;font-family:'Liberation Mono', monospace;font-size:11.8px;color:#5f6163;font-weight:normal;white-space:pre;line-height:normal;letter-spacing:0px;width:59.6px;text-align:right;transform:scaleY(1.1);transform-origin:0 9.83px;-webkit-text-stroke:0.25px currentColor;">28</div>
<div style="position:absolute;left:344px;top:654.89px;font-family:'Liberation Mono', monospace;font-size:13.333px;color:#a9b7c6;font-weight:normal;white-space:pre;line-height:normal;letter-spacing:0px;transform:scaleY(1.1);transform-origin:0 11.11px;-webkit-text-stroke:0.25px currentColor;"><span style="color:#a9b7c6;">                    </span><span style="color:#8888c6;">print</span><span style="color:#a9b7c6;">(</span><span style="color:#6a8759;">&quot;Not Quite. The next clue is &quot;</span><span style="color:#a9b7c6;"> + </span><span style="color:#a9b7c6;">list1</span><span style="color:#a9b7c6;">.</span><span style="color:#a9b7c6;">pop</span><span style="color:#a9b7c6;">(</span><span style="color:#6897bb;">0</span><span style="color:#a9b7c6;">))</span></div>
<div style="position:absolute;left:240px;top:678.17px;font-family:'Liberation Mono', monospace;font-size:11.8px;color:#5f6163;font-weight:normal;white-space:pre;line-height:normal;letter-spacing:0px;width:59.6px;text-align:right;transform:scaleY(1.1);transform-origin:0 9.83px;-webkit-text-stroke:0.25px currentColor;">29</div>
<div style="position:absolute;left:344px;top:676.89px;font-family:'Liberation Mono', monospace;font-size:13.333px;color:#a9b7c6;font-weight:normal;white-space:pre;line-height:normal;letter-spacing:0px;transform:scaleY(1.1);transform-origin:0 11.11px;-webkit-text-stroke:0.25px currentColor;"><span style="color:#a9b7c6;">                    </span><span style="color:#a9b7c6;">ans</span><span style="color:#a9b7c6;"> = </span><span style="color:#8888c6;">input</span><span style="color:#a9b7c6;">(</span><span style="color:#a9b7c6;">question</span><span style="color:#a9b7c6;">)</span></div>
<div style="position:absolute;left:1144px;top:125px;width:2px;height:17px;background:#cfcfcf;"></div>
<div style="position:absolute;left:279px;top:699px;width:1620px;height:22px;background:#2d2e30;"></div>
<div style="position:absolute;left:279px;top:699px;width:1620px;height:1px;background:#2a2b2c;"></div>
<div style="position:absolute;left:374px;top:276px;width:1px;height:22px;background:#363636;"></div>
<div style="position:absolute;left:374px;top:320px;width:1px;height:379px;background:#363636;"></div>
<div style="position:absolute;left:406px;top:386px;width:1px;height:22px;background:#363636;"></div>
<div style="position:absolute;left:406px;top:430px;width:1px;height:269px;background:#363636;"></div>
<div style="position:absolute;left:438px;top:496px;width:1px;height:22px;background:#363636;"></div>
<div style="position:absolute;left:438px;top:540px;width:1px;height:159px;background:#363636;"></div>
<div style="position:absolute;left:470px;top:606px;width:1px;height:22px;background:#363636;"></div>
<div style="position:absolute;left:470px;top:650px;width:1px;height:49px;background:#363636;"></div>
<svg style="position:absolute;left:334px;top:195px;" width="10" height="12" viewBox="0 0 10 12"><path d="M0.5 0.5h8v7.2l-4 3.8-4-3.8z" fill="#272728" stroke="#505152" stroke-width="1"/><path d="M2.3 4.6h4.400" stroke="#5a5b5c" stroke-width="1"/></svg>
<svg style="position:absolute;left:334px;top:305px;" width="10" height="12" viewBox="0 0 10 12"><path d="M0.5 0.5h8v7.2l-4 3.8-4-3.8z" fill="#272728" stroke="#505152" stroke-width="1"/><path d="M2.3 4.6h4.400" stroke="#5a5b5c" stroke-width="1"/></svg>
<svg style="position:absolute;left:334px;top:415px;" width="10" height="12" viewBox="0 0 10 12"><path d="M0.5 0.5h8v7.2l-4 3.8-4-3.8z" fill="#272728" stroke="#505152" stroke-width="1"/><path d="M2.3 4.6h4.400" stroke="#5a5b5c" stroke-width="1"/></svg>
<svg style="position:absolute;left:334px;top:525px;" width="10" height="12" viewBox="0 0 10 12"><path d="M0.5 0.5h8v7.2l-4 3.8-4-3.8z" fill="#272728" stroke="#505152" stroke-width="1"/><path d="M2.3 4.6h4.400" stroke="#5a5b5c" stroke-width="1"/></svg>
<svg style="position:absolute;left:334px;top:635px;" width="10" height="12" viewBox="0 0 10 12"><path d="M0.5 0.5h8v7.2l-4 3.8-4-3.8z" fill="#272728" stroke="#505152" stroke-width="1"/><path d="M2.3 4.6h4.400" stroke="#5a5b5c" stroke-width="1"/></svg>
<svg style="position:absolute;left:1828px;top:63px;" width="14" height="14" viewBox="0 0 14 14"><path d="M1.8 5.2L5.4 8.6 11.7 2.2" fill="none" stroke="#499c54" stroke-width="2.6"/><path d="M1.5 12.7L3.5 10.2 5.5 12.7 7.5 10.2 9.5 12.7 11.8 10.2" fill="none" stroke="#499c54" stroke-width="1.1"/></svg>
<div style="position:absolute;left:1844px;top:62.94px;font-family:'Liberation Sans', sans-serif;font-size:12px;color:#b0b0b0;font-weight:normal;white-space:pre;line-height:normal;letter-spacing:0px;">9</div>
<svg style="position:absolute;left:1861px;top:65px;" width="11" height="8" viewBox="0 0 11 8"><path d="M1.2 6.2l4.3-4.3 4.3 4.3" fill="none" stroke="#a8a8a8" stroke-width="1.3"/></svg>
<svg style="position:absolute;left:1882px;top:66px;" width="11" height="8" viewBox="0 0 11 8"><path d="M1.2 1.8l4.3 4.3 4.3-4.3" fill="none" stroke="#a8a8a8" stroke-width="1.3"/></svg>
<div style="position:absolute;left:1888px;top:84px;width:8px;height:189px;border-radius:4px;background:#464646"></div>
<div style="position:absolute;left:21px;top:722px;width:1878px;height:26px;background:#37383a;"></div>
<div style="position:absolute;left:21px;top:748px;width:1878px;height:290px;background:#37383a;"></div>
<div style="position:absolute;left:78px;top:748px;width:1807px;height:290px;background:#262626;"></div>
<div style="position:absolute;left:49px;top:748px;width:1px;height:290px;background:#2b2c2e;"></div>
<div style="position:absolute;left:78px;top:748px;width:1px;height:290px;background:#2f3031;"></div>
<div style="position:absolute;left:21px;top:748px;width:1878px;height:1px;background:#2b2c2e;"></div>
<div style="position:absolute;left:27px;top:728.02px;font-family:'Liberation Sans', sans-serif;font-size:13px;color:#c6c6c6;font-weight:normal;white-space:pre;line-height:normal;letter-spacing:0.3px;-webkit-text-stroke:0.15px currentColor">Run:</div>
<svg style="position:absolute;left:75px;top:728px" width="14" height="14" viewBox="0 0 14 14"><g fill="#3b6c8b"><rect x="3.5" y="0" width="7" height="5" rx="1.8"/><rect x="0" y="3.6" width="10.5" height="4" rx="1.8"/><rect x="0" y="3.6" width="3.6" height="6.9" rx="1.8"/></g><rect x="3.4" y="3.1" width="3.6" height="0.6" fill="#37383a"/><circle cx="5.4" cy="1.7" r="0.7" fill="#37383a"/><g fill="#8e7b2c"><rect x="3.5" y="9" width="7" height="5" rx="1.8"/><rect x="3.5" y="6.4" width="10.5" height="4" rx="1.8"/><rect x="10.4" y="3.5" width="3.6" height="6.9" rx="1.8"/></g><rect x="7" y="10.3" width="3.6" height="0.6" fill="#37383a"/><circle cx="8.6" cy="12.3" r="0.7" fill="#37383a"/></svg>
<div style="position:absolute;left:94px;top:728.02px;font-family:'Liberation Sans', sans-serif;font-size:13px;color:#c6c6c6;font-weight:normal;white-space:pre;line-height:normal;letter-spacing:0.3px;-webkit-text-stroke:0.15px currentColor">whatAmI</div>
<svg style="position:absolute;left:153px;top:731px;" width="10" height="10" viewBox="0 0 10 10"><path d="M1.5 1.5l7 7M8.5 1.5l-7 7" stroke="#6e6f70" stroke-width="1.1"/></svg>
<div style="position:absolute;left:62px;top:746px;width:111px;height:3px;border-radius:2px;background:#747a80"></div>
<svg style="position:absolute;left:1853px;top:728px;" width="14" height="14" viewBox="0 0 14 14"><g fill="#afb1b3"><circle cx="7" cy="7" r="4.7"/><rect x="5.4" y="0.6" width="3.2" height="3.4" rx="1" transform="rotate(0 7 7)"/><rect x="5.4" y="0.6" width="3.2" height="3.4" rx="1" transform="rotate(60 7 7)"/><rect x="5.4" y="0.6" width="3.2" height="3.4" rx="1" transform="rotate(120 7 7)"/><rect x="5.4" y="0.6" width="3.2" height="3.4" rx="1" transform="rotate(180 7 7)"/><rect x="5.4" y="0.6" width="3.2" height="3.4" rx="1" transform="rotate(240 7 7)"/><rect x="5.4" y="0.6" width="3.2" height="3.4" rx="1" transform="rotate(300 7 7)"/></g><circle cx="7" cy="7" r="1.9" fill="#37383a"/></svg>
<div style="position:absolute;left:1880px;top:734px;width:12px;height:2px;background:#cfd0d1;"></div>
<div style="position:absolute;left:1885px;top:748px;width:14px;height:290px;background:#35393c;"></div>
<div style="position:absolute;left:1888px;top:752px;width:8px;height:247px;border-radius:4px;background:#4e4f51"></div>
<svg style="position:absolute;left:30px;top:757px;" width="12" height="13" viewBox="0 0 12 13"><path d="M1 0.5L10.8 6.5 1 12.5z" fill="#499c54"/></svg>
<svg style="position:absolute;left:27px;top:781px;" width="16" height="16" viewBox="0 0 16 16"><path fill="#afb1b3" d="M13.6 4.2l-2.3 2.3-2-0.5-0.5-2 2.3-2.3c-1.700-0.700-3.700-0.300-5 1-1.100 1.100-1.500 2.700-1.100 4.100L0.600 11.200 3.400 14l4.400-4.400c1.400 0.400 3 0 4.100-1.100 1.300-1.300 1.700-3.300 1-5z" transform="translate(1 1) scale(0.95)"/></svg>
<div style="position:absolute;left:25px;top:805px;width:20px;height:1px;background:#434445;"></div>
<div style="position:absolute;left:30px;top:817px;width:10px;height:10px;background:#4a4b4c;"></div>
<div style="position:absolute;left:25px;top:838px;width:20px;height:1px;background:#434445;"></div>
<svg style="position:absolute;left:29px;top:850px;" width="13" height="11" viewBox="0 0 13 11"><g fill="#afb1b3"><rect x="0" y="0" width="7" height="5"/><rect x="8" y="0" width="4" height="5"/><rect x="0" y="6" width="12" height="4"/></g></svg>
<div style="position:absolute;left:25px;top:871px;width:20px;height:1px;background:#434445;"></div>
<svg style="position:absolute;left:27px;top:880px;" width="16" height="16" viewBox="0 0 16 16"><path fill="#afb1b3" d="M9.5 0.5l5.800 5.200-2.200 0.400-2.100 2.400 0.300 2.800-1.300 0.700-2.600-2.700L1 15 0.500 14.500 6.300 8.200 3.600 5.700 4.300 4.400 7.100 4.600 9.300 2.400z"/></svg>
<svg style="position:absolute;left:58px;top:757px;" width="12" height="14" viewBox="0 0 12 14"><path d="M6 1.5v11.500M1.2 6.200L6 1.500l4.800 4.700" fill="none" stroke="#5c5d5e" stroke-width="1.5"/></svg>
<svg style="position:absolute;left:58px;top:783px;" width="12" height="14" viewBox="0 0 12 14"><path d="M6 0.5v11.500M1.2 7.800L6 12.500l4.800-4.700" fill="none" stroke="#5c5d5e" stroke-width="1.5"/></svg>
<svg style="position:absolute;left:57px;top:809px;" width="16" height="16" viewBox="0 0 16 16"><g fill="#afb1b3"><rect x="1" y="1" width="12" height="2"/><rect x="1" y="6" width="8" height="2"/><rect x="1" y="11" width="3" height="2"/></g><path d="M9 7h1.5a2.500 2.500 0 0 1 0 5H7" fill="none" stroke="#afb1b3" stroke-width="1.8"/><path d="M8 9.600L5.500 12 8 14.400z" fill="#afb1b3"/></svg>
<div style="position:absolute;left:53px;top:831px;width:22px;height:22px;border-radius:3px;background:#505356"></div>
<svg style="position:absolute;left:58px;top:835px;" width="14" height="14" viewBox="0 0 14 14"><g fill="#afb1b3"><rect x="0" y="2.800" width="4" height="2"/><rect x="0" y="6.800" width="4" height="2"/><rect x="0" y="10.800" width="12" height="2"/><rect x="8.200" y="0" width="2" height="5"/><path d="M5.300 4.800h7.800L9.200 8.800z"/></g></svg>
<svg style="position:absolute;left:56px;top:861px;" width="16" height="16" viewBox="0 0 16 16"><g fill="#afb1b3"><rect x="3" y="1" width="8" height="3"/><rect x="1" y="5" width="14" height="5"/><path d="M3.200 9h9.600v6H3.200zM4.500 10.200v3.600h7v-3.600z" fill-rule="evenodd"/></g><circle cx="13.200" cy="6.500" r="0.700" fill="#37383a"/></svg>
<svg style="position:absolute;left:58px;top:886px;" width="12" height="15" viewBox="0 0 12 15"><g fill="#afb1b3"><rect x="0" y="1.500" width="11" height="2"/><rect x="4" y="0.500" width="3" height="1.500"/><path d="M1 4.800h9v8.200a1 1 0 0 1-1 1H2a1 1 0 0 1-1-1z"/></g></svg>
<div style="position:absolute;left:90px;top:754.39px;font-family:'Liberation Mono', monospace;font-size:13.333px;color:#bbbbbb;font-weight:normal;white-space:pre;line-height:normal;letter-spacing:0px;transform:scaleY(1.1);transform-origin:0 11.11px;-webkit-text-stroke:0.25px currentColor;">/Users/zwr/PycharmProjects/pythonProject1/venv/bin/python /Users/zwr/PycharmProjects/pythonProject1/venv/bin/whatAmI.py</div>
<div style="position:absolute;left:90px;top:776.39px;font-family:'Liberation Mono', monospace;font-size:13.333px;color:#bbbbbb;font-weight:normal;white-space:pre;line-height:normal;letter-spacing:0px;transform:scaleY(1.1);transform-origin:0 11.11px;-webkit-text-stroke:0.25px currentColor;">The first clue is Scotland</div>
<div style="position:absolute;left:90px;top:798.39px;font-family:'Liberation Mono', monospace;font-size:13.333px;color:#bbbbbb;font-weight:normal;white-space:pre;line-height:normal;letter-spacing:0px;transform:scaleY(1.1);transform-origin:0 11.11px;-webkit-text-stroke:0.25px currentColor;">What do you think it is?<span style="color:#389334;font-style:italic">paggs</span></div>
<div style="position:absolute;left:90px;top:820.39px;font-family:'Liberation Mono', monospace;font-size:13.333px;color:#bbbbbb;font-weight:normal;white-space:pre;line-height:normal;letter-spacing:0px;transform:scaleY(1.1);transform-origin:0 11.11px;-webkit-text-stroke:0.25px currentColor;">Not Quite. The next clue is PAGGS</div>
<div style="position:absolute;left:90px;top:842.39px;font-family:'Liberation Mono', monospace;font-size:13.333px;color:#bbbbbb;font-weight:normal;white-space:pre;line-height:normal;letter-spacing:0px;transform:scaleY(1.1);transform-origin:0 11.11px;-webkit-text-stroke:0.25px currentColor;">What do you think it is?<span style="color:#389334;font-style:italic">scouts</span></div>
<div style="position:absolute;left:90px;top:864.39px;font-family:'Liberation Mono', monospace;font-size:13.333px;color:#bbbbbb;font-weight:normal;white-space:pre;line-height:normal;letter-spacing:0px;transform:scaleY(1.1);transform-origin:0 11.11px;-webkit-text-stroke:0.25px currentColor;">Not Quite. The next clue is Nessie ubcamp</div>
<div style="position:absolute;left:90px;top:886.39px;font-family:'Liberation Mono', monospace;font-size:13.333px;color:#bbbbbb;font-weight:normal;white-space:pre;line-height:normal;letter-spacing:0px;transform:scaleY(1.1);transform-origin:0 11.11px;-webkit-text-stroke:0.25px currentColor;">What do you think it is?<span style="color:#389334;font-style:italic">blue</span></div>
<div style="position:absolute;left:90px;top:908.39px;font-family:'Liberation Mono', monospace;font-size:13.333px;color:#bbbbbb;font-weight:normal;white-space:pre;line-height:normal;letter-spacing:0px;transform:scaleY(1.1);transform-origin:0 11.11px;-webkit-text-stroke:0.25px currentColor;">Not Quite. The next clue is 5th Carshalton</div>
<div style="position:absolute;left:90px;top:930.39px;font-family:'Liberation Mono', monospace;font-size:13.333px;color:#bbbbbb;font-weight:normal;white-space:pre;line-height:normal;letter-spacing:0px;transform:scaleY(1.1);transform-origin:0 11.11px;-webkit-text-stroke:0.25px currentColor;">What do you think it is?<span style="color:#389334;font-style:italic">aidan</span></div>
<div style="position:absolute;left:90px;top:952.39px;font-family:'Liberation Mono', monospace;font-size:13.333px;color:#bbbbbb;font-weight:normal;white-space:pre;line-height:normal;letter-spacing:0px;transform:scaleY(1.1);transform-origin:0 11.11px;-webkit-text-stroke:0.25px currentColor;">Not Quite. The next clue is Senior patrol leader</div>
<div style="position:absolute;left:90px;top:974.39px;font-family:'Liberation Mono', monospace;font-size:13.333px;color:#bbbbbb;font-weight:normal;white-space:pre;line-height:normal;letter-spacing:0px;transform:scaleY(1.1);transform-origin:0 11.11px;-webkit-text-stroke:0.25px currentColor;">What do you think it is?<span style="color:#389334;font-style:italic">blueboy</span></div>
<div style="position:absolute;left:90px;top:996.39px;font-family:'Liberation Mono', monospace;font-size:13.333px;color:#bbbbbb;font-weight:normal;white-space:pre;line-height:normal;letter-spacing:0px;transform:scaleY(1.1);transform-origin:0 11.11px;-webkit-text-stroke:0.25px currentColor;">Correct!</div>
<div style="position:absolute;left:0px;top:1038px;width:1920px;height:21px;background:#37383a;"></div>
<div style="position:absolute;left:0px;top:1038px;width:1920px;height:1px;background:#2f3032;"></div>
<div style="position:absolute;left:0px;top:1059px;width:1920px;height:1px;background:#2f3032;"></div>
<div style="position:absolute;left:141px;top:1039px;width:54px;height:20px;background:#2a2b2c;"></div>
<svg style="position:absolute;left:32px;top:1042px;" width="14" height="15" viewBox="0 0 14 15"><g fill="none" stroke="#afb1b3" stroke-width="1.5"><path d="M5 2.8V12"/><path d="M5 9.6C5 7.6 10 8 10 4.7"/></g><circle cx="5" cy="2.8" r="1.7" fill="#afb1b3"/><circle cx="10" cy="4.7" r="1.7" fill="#afb1b3"/><circle cx="5" cy="12" r="1.7" fill="#afb1b3"/></svg>
<div style="position:absolute;left:50px;top:1043.00px;font-family:'Liberation Sans', sans-serif;font-size:11.5px;color:#bbbbbb;font-weight:normal;white-space:pre;line-height:normal;letter-spacing:0.2px;-webkit-text-stroke:0.15px currentColor">Version Control</div>
<svg style="position:absolute;left:151px;top:1044px;" width="10" height="11" viewBox="0 0 10 11"><path d="M0.500 0.500L9.500 5.500 0.500 10.500z" fill="#a0a3a5"/></svg>
<div style="position:absolute;left:167px;top:1043.00px;font-family:'Liberation Sans', sans-serif;font-size:11.5px;color:#f0f0f0;font-weight:normal;white-space:pre;line-height:normal;letter-spacing:0.2px;-webkit-text-stroke:0.35px #f0f0f0">Run</div>
<svg style="position:absolute;left:208px;top:1043px;" width="13" height="14" viewBox="0 0 13 14"><g fill="#afb1b3"><path d="M6.500 0.500l6 3-6 3-6-3z"/><path d="M0.500 6.200l6 3 6-3v1.300l-6 3-6-3z"/><path d="M0.500 9.200l6 3 6-3v1.300l-6 3-6-3z"/></g></svg>
<div style="position:absolute;left:225px;top:1043.00px;font-family:'Liberation Sans', sans-serif;font-size:11.5px;color:#bbbbbb;font-weight:normal;white-space:pre;line-height:normal;letter-spacing:0.2px;-webkit-text-stroke:0.15px currentColor">Python Packages</div>
<svg style="position:absolute;left:338px;top:1045px;" width="12" height="9" viewBox="0 0 12 9"><g fill="#afb1b3"><rect x="0" y="0" width="2" height="2"/><rect x="3" y="0" width="9" height="2"/><rect x="0" y="3.500" width="2" height="2"/><rect x="3" y="3.500" width="9" height="2"/><rect x="0" y="7" width="2" height="2"/><rect x="3" y="7" width="9" height="2"/></g></svg>
<div style="position:absolute;left:354px;top:1043.00px;font-family:'Liberation Sans', sans-serif;font-size:11.5px;color:#bbbbbb;font-weight:normal;white-space:pre;line-height:normal;letter-spacing:0.2px;-webkit-text-stroke:0.15px currentColor">TODO</div>
<svg style="position:absolute;left:410px;top:1043px;" width="12" height="13" viewBox="0 0 12 13"><path fill="#afb1b3" d="M6 0.300C3.100 0.300 3.300 1.500 3.300 1.500v1.300h2.800v0.500H2S0.300 3.100 0.300 6c0 2.900 1.500 2.800 1.500 2.800h0.900V7.500s0-1.500 1.500-1.500h2.700s1.400 0 1.400-1.400V1.700S8.500 0.300 6 0.300zM4.500 1a0.500 0.500 0 1 1 0 1 0.500 0.500 0 0 1 0-1z"/><path fill="#afb1b3" d="M6.100 12.700c2.900 0 2.700-1.200 2.700-1.200V10.200H6v-0.500h4.100s1.600 0.200 1.600-2.700c0-2.900-1.500-2.800-1.500-2.800H9.300v1.300s0 1.500-1.500 1.500H5.100s-1.400 0-1.400 1.400v2.900s-0.200 1.400 2.400 1.400zM7.600 12a0.500 0.500 0 1 1 0-1 0.500 0.500 0 0 1 0 1z"/></svg>
<div style="position:absolute;left:427px;top:1043.00px;font-family:'Liberation Sans', sans-serif;font-size:11.5px;color:#bbbbbb;font-weight:normal;white-space:pre;line-height:normal;letter-spacing:0.2px;-webkit-text-stroke:0.15px currentColor">Python Console</div>
<svg style="position:absolute;left:534px;top:1043px;" width="12" height="12" viewBox="0 0 12 12"><circle cx="6" cy="6" r="5.500" fill="#afb1b3"/><rect x="5" y="2.500" width="2" height="4.500" fill="#37383a"/><rect x="5" y="8" width="2" height="2" fill="#37383a"/></svg>
<div style="position:absolute;left:550px;top:1043.00px;font-family:'Liberation Sans', sans-serif;font-size:11.5px;color:#bbbbbb;font-weight:normal;white-space:pre;line-height:normal;letter-spacing:0.2px;-webkit-text-stroke:0.15px currentColor">Problems</div>
<svg style="position:absolute;left:621px;top:1043px;" width="12" height="12" viewBox="0 0 12 12"><rect x="0.500" y="0.500" width="11" height="11" fill="#afb1b3"/><path d="M2.500 3l2.500 2.200-2.500 2.200" fill="none" stroke="#37383a" stroke-width="1.1"/><rect x="5.500" y="8" width="4" height="1.100" fill="#37383a"/></svg>
<div style="position:absolute;left:638px;top:1043.00px;font-family:'Liberation Sans', sans-serif;font-size:11.5px;color:#bbbbbb;font-weight:normal;white-space:pre;line-height:normal;letter-spacing:0.2px;-webkit-text-stroke:0.15px currentColor">Terminal</div>
<svg style="position:absolute;left:703px;top:1043px;" width="13" height="13" viewBox="0 0 13 13"><path d="M6.500 0.300l5.600 3.100v6.200l-5.600 3.100-5.600-3.100V3.400z" fill="#afb1b3"/><path d="M4.800 3.800l4 2.700-4 2.700z" fill="#37383a"/></svg>
<div style="position:absolute;left:720px;top:1043.00px;font-family:'Liberation Sans', sans-serif;font-size:11.5px;color:#bbbbbb;font-weight:normal;white-space:pre;line-height:normal;letter-spacing:0.2px;-webkit-text-stroke:0.15px currentColor">Services</div>
<div style="position:absolute;left:0px;top:1060px;width:1920px;height:20px;background:#37383a;"></div>
<svg style="position:absolute;left:5px;top:1063px;" width="14" height="14" viewBox="0 0 14 14"><g fill="none" stroke="#9a9b9c" stroke-width="1"><rect x="3.500" y="0.500" width="9" height="9"/><path d="M0.500 3v9.500h9.500"/></g></svg>
<div style="position:absolute;left:31px;top:1063.40px;font-family:'Liberation Sans', sans-serif;font-size:11.5px;color:#a8a8a8;font-weight:normal;white-space:pre;line-height:normal;letter-spacing:0.14px;-webkit-text-stroke:0.15px currentColor">Download pre-built shared indexes: Reduce the indexing time and CPU load with pre-built Python packages shared indexes // Always download // Download once // Don’t show again // Configur... (today 16:11</div>
<svg style="position:absolute;left:1514px;top:1062px;" width="17" height="17" viewBox="0 0 17 17"><circle cx="8.500" cy="8.500" r="7.300" fill="none" stroke="#9a9b9c" stroke-width="1.3"/><path d="M5 8.700l2.500 2.300 4.300-4.600" fill="none" stroke="#9a9b9c" stroke-width="1.3"/></svg>
<div style="position:absolute;left:1536px;top:1063.40px;font-family:'Liberation Sans', sans-serif;font-size:11.5px;color:#a8a8a8;font-weight:normal;white-space:pre;line-height:normal;letter-spacing:0.2px;-webkit-text-stroke:0.15px currentColor">59m</div>
<div style="position:absolute;left:1571px;top:1063.40px;font-family:'Liberation Sans', sans-serif;font-size:11.5px;color:#a8a8a8;font-weight:normal;white-space:pre;line-height:normal;letter-spacing:0.2px;-webkit-text-stroke:0.15px currentColor">4:101</div>
<div style="position:absolute;left:1610px;top:1063.40px;font-family:'Liberation Sans', sans-serif;font-size:11.5px;color:#a8a8a8;font-weight:normal;white-space:pre;line-height:normal;letter-spacing:0.2px;-webkit-text-stroke:0.15px currentColor">LF</div>
<div style="position:absolute;left:1634px;top:1063.40px;font-family:'Liberation Sans', sans-serif;font-size:11.5px;color:#a8a8a8;font-weight:normal;white-space:pre;line-height:normal;letter-spacing:0.2px;-webkit-text-stroke:0.15px currentColor">UTF-8</div>
<div style="position:absolute;left:1679px;top:1063.40px;font-family:'Liberation Sans', sans-serif;font-size:11.5px;color:#a8a8a8;font-weight:normal;white-space:pre;line-height:normal;letter-spacing:0.2px;-webkit-text-stroke:0.15px currentColor">4 spaces</div>
<div style="position:absolute;left:1738px;top:1063.40px;font-family:'Liberation Sans', sans-serif;font-size:11.5px;color:#a8a8a8;font-weight:normal;white-space:pre;line-height:normal;letter-spacing:0.2px;-webkit-text-stroke:0.15px currentColor">Python 3.9 (pythonProject1)</div>
<svg style="position:absolute;left:1893px;top:1063px;" width="14" height="14" viewBox="0 0 14 14"><path d="M2.500 6V3.800a2.300 2.300 0 0 1 4.600 0" fill="none" stroke="#9a9b9c" stroke-width="1.3"/><rect x="5" y="6.500" width="8" height="6.500" fill="#9a9b9c"/></svg>
</div></body></html>
